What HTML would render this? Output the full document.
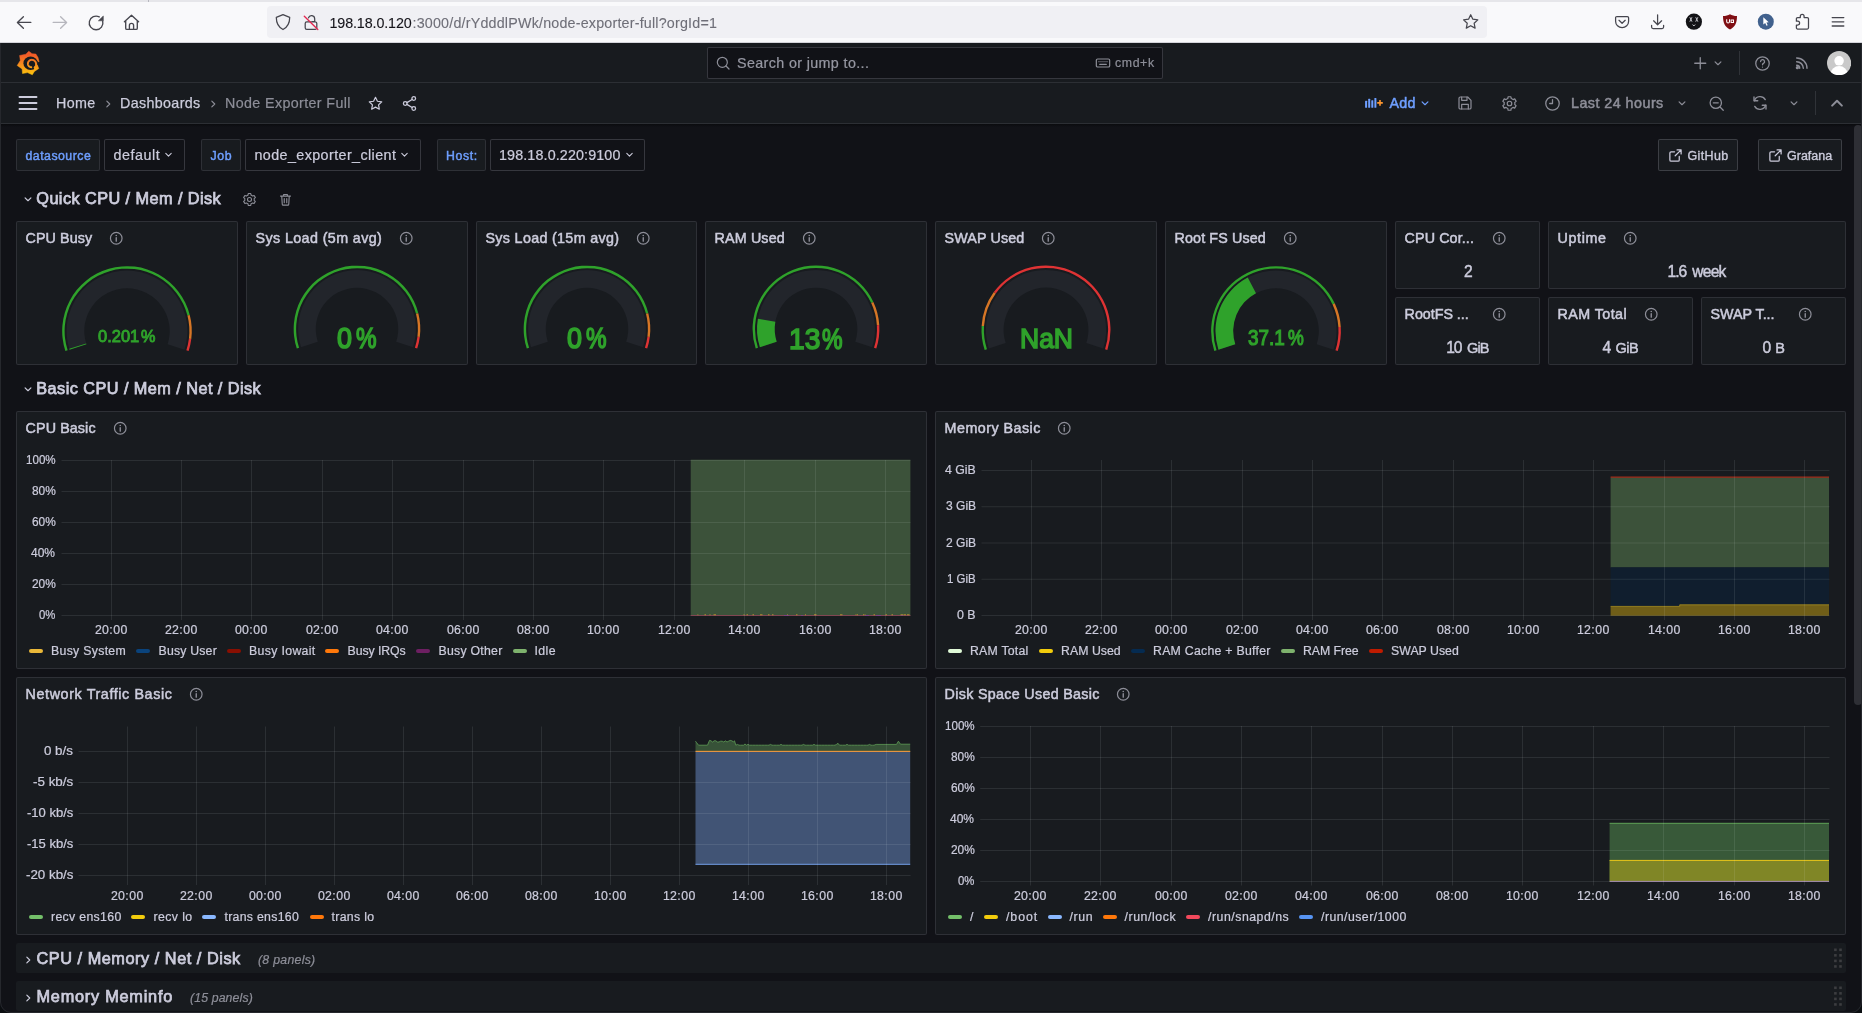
<!DOCTYPE html>
<html lang="en"><head><meta charset="utf-8"><title>Node Exporter Full - Dashboards - Grafana</title>
<style>
html,body{margin:0;padding:0;}
body{width:1862px;height:1013px;overflow:hidden;position:relative;background:#111217;font-family:"Liberation Sans",Arial,sans-serif;}
.b{position:absolute;display:block;}
.t{position:absolute;white-space:pre;display:block;}
svg text{font-family:"Liberation Sans",Arial,sans-serif;}
#root{position:absolute;left:0;top:0;width:1862px;height:1013px;will-change:transform;overflow:hidden;}
</style></head><body><div id="root">
<div class="b" style="left:0.00px;top:0.00px;width:1862.00px;height:43.00px;background:#f9f9fb;"></div>
<div class="b" style="left:0.00px;top:0.00px;width:1862.00px;height:2.00px;background:#e6e6ea;"></div>
<div class="b" style="left:148.00px;top:0.00px;width:1.00px;height:2.00px;background:#b8b8c0;"></div>
<div class="b" style="left:0.00px;top:42.00px;width:1862.00px;height:1.00px;background:#d4d4da;"></div>
<div class="b" style="left:267.00px;top:6.00px;width:1220.00px;height:32.00px;background:#f0f0f4;border-radius:4px;"></div>
<svg class="b" style="left:0;top:0" width="1862" height="43" viewBox="0 0 1862 43"><path d="M30.800 22.400H17.400M23.400 16.800L17.400 22.400L23.400 28.200" fill="none" stroke="#46464e" stroke-width="1.35" stroke-linecap="round" stroke-linejoin="round"/><path d="M53.200 22.400H66.600M60.600 16.800L66.600 22.400L60.600 28.200" fill="none" stroke="#b6b6bd" stroke-width="1.35" stroke-linecap="round" stroke-linejoin="round"/><path d="M102.700 21.200A6.850 6.850 0 1 1 99.300 16.900" fill="none" stroke="#46464e" stroke-width="1.35" stroke-linecap="round" stroke-linejoin="round"/><path d="M98.400 20.800L103.300 16L103.300 20.800Z" fill="#46464e" stroke="#46464e" stroke-width="0.600" stroke-linejoin="round"/><path d="M124.400 21.800L131.500 15.300L138.600 21.800M125.700 20.800V28.200a1.200 1.200 0 0 0 1.200 1.200h9.200a1.200 1.200 0 0 0 1.200-1.200V20.800M129.400 29.400V25.400a2.100 2.100 0 0 1 4.200 0V29.400" fill="none" stroke="#46464e" stroke-width="1.35" stroke-linecap="round" stroke-linejoin="round"/><path d="M283 14.600L289.700 17.400C289.700 22.800 287.600 27 283 29.500C278.400 27 276.300 22.800 276.300 17.400Z" fill="none" stroke="#46464e" stroke-width="1.25" stroke-linecap="round" stroke-linejoin="round"/><path d="M306.800 21.900h8.400a1.600 1.600 0 0 1 1.600 1.600v4.300a1.600 1.600 0 0 1-1.600 1.600h-8.400a1.600 1.600 0 0 1-1.600-1.600v-4.300a1.600 1.600 0 0 1 1.600-1.600zM308.500 17.800a3.200 3.200 0 0 1 6.200 .900V21.700h-2.400" fill="none" stroke="#46464e" stroke-width="1.25" stroke-linecap="round" stroke-linejoin="round"/><path d="M304.300 16.200L317.800 29.600" fill="none" stroke="#e22850" stroke-width="1.35" stroke-linecap="round" stroke-linejoin="round"/><path d="M1470.700 14.700l2.150 4.500 4.950.650-3.650 3.400.950 4.900-4.400-2.400-4.400 2.400.950-4.900-3.650-3.400 4.950-.650z" fill="none" stroke="#46464e" stroke-width="1.25" stroke-linecap="round" stroke-linejoin="round"/><path d="M1616.900 16.500h10.400a1.300 1.300 0 0 1 1.300 1.300v3.400a6.500 6.500 0 0 1-13 0v-3.400a1.300 1.300 0 0 1 1.300-1.300zM1619 20.300l3.100 3 3.100-3" fill="none" stroke="#46464e" stroke-width="1.25" stroke-linecap="round" stroke-linejoin="round"/><path d="M1657.600 14.800V24.600M1653.600 20.800l4 4 4-4M1651.600 25.300v1.700a1.500 1.500 0 0 0 1.500 1.500h9a1.500 1.500 0 0 0 1.500-1.500v-1.700" fill="none" stroke="#46464e" stroke-width="1.25" stroke-linecap="round" stroke-linejoin="round"/><circle cx="1693.900" cy="21.700" r="8.100" fill="#131316"/><path d="M1689.800 17.200l2.200 4.500M1692 17.200l-2.200 4.500M1695.700 17.200l2.200 4.500M1697.900 17.200l-2.200 4.500M1692.600 24.500l1.300 1.500 1.300-1.500" stroke="#e6e6ec" stroke-width=".800" fill="none"/><path d="M1730 14.200c1.900 1.200 4.300 1.700 7 1.900 0 6.900-2 11.100-7 13.500-5-2.400-7-6.600-7-13.500 2.700-.2 5.100-.7 7-1.900z" fill="#800f14"/><path d="M1726.700 19.300v2.200a1.400 1.400 0 0 0 2.800 0V19.300M1731.100 20h2.400v2.400h-2.400z" stroke="#fff" stroke-width="1.050" fill="none"/><circle cx="1765.800" cy="21.700" r="8" fill="#41618d"/><path d="M1763.300 17.200l5.400 5-2.300.2 1.300 2.900-1.200.5-1.300-2.900-1.900 1.500z" fill="#fff"/><path d="M1800.300 17.600v-1.200a1.900 1.900 0 0 1 3.800 0v1.200h3.200a1.200 1.200 0 0 1 1.200 1.200v9a1.200 1.200 0 0 1-1.200 1.200h-9.700a1.200 1.200 0 0 1-1.200-1.200v-2.800h1.300a1.900 1.900 0 0 0 0-3.800h-1.300v-2.400a1.200 1.200 0 0 1 1.200-1.200z" fill="none" stroke="#46464e" stroke-width="1.25" stroke-linecap="round" stroke-linejoin="round"/><path d="M1832.200 17.600h11.600M1832.200 21.800h11.600M1832.200 26h11.600" fill="none" stroke="#46464e" stroke-width="1.3" stroke-linecap="round" stroke-linejoin="round"/></svg>
<span class="t" style="left:329.50px;top:15px;font-size:14.30px;line-height:16px;color:#15141a;letter-spacing:-0.114px;-webkit-text-stroke:0.10px #15141a;">198.18.0.120</span>
<span class="t" style="left:412.50px;top:15px;font-size:14.30px;line-height:16px;color:#6f6f78;letter-spacing:0.195px;-webkit-text-stroke:0.10px #6f6f78;">:3000/d/rYdddlPWk/node-exporter-full?orgId=1</span>
<div class="b" style="left:0.00px;top:43.00px;width:1862.00px;height:40.00px;background:#181b1f;"></div>
<div class="b" style="left:0.00px;top:82.00px;width:1862.00px;height:1.00px;background:#2c2f34;"></div>
<div class="b" style="left:0.00px;top:83.00px;width:1862.00px;height:40.00px;background:#181b1f;"></div>
<div class="b" style="left:0.00px;top:123.00px;width:1862.00px;height:1.00px;background:#2c2f34;"></div>
<div class="b" style="left:0.00px;top:124.00px;width:1862.00px;height:3.00px;background:linear-gradient(#0a0b0e,#111217);"></div>
<svg class="b" style="left:8px;top:44px" width="40" height="38" viewBox="0 0 40 38">
<defs><linearGradient id="lg" gradientUnits="userSpaceOnUse" x1="0" y1="31" x2="0" y2="7"><stop offset="0" stop-color="#fcc60c"/><stop offset=".5" stop-color="#f6851f"/><stop offset=".85" stop-color="#f05a28"/></linearGradient></defs>
<path d="M20.8 7.2L17.9 10.2L11.6 11.5L12.3 16.5L9.2 21.5L14.1 24.9L14.5 29.5L19.5 28.6L24.3 30.8L26.4 27.4L30.8 24.5L29.3 20.9L31.0 17.6L30.0 13.5L27.9 10.1L24.0 9.7Z" fill="url(#lg)" stroke="url(#lg)" stroke-width="0.5" stroke-linejoin="round"/>
<ellipse cx="22.6" cy="19.25" rx="7.2" ry="6.65" fill="#181b1f"/>
<path d="M29.0 17.0L32 19.0L29.7 21.0Z" fill="#181b1f"/>
<path d="M26.92 23.22L27.31 22.72L27.63 22.18L27.87 21.60L28.02 21.00L28.10 20.39L28.09 19.78L28.00 19.18L27.83 18.61L27.58 18.06L27.27 17.56L26.89 17.11L26.46 16.72L25.99 16.39L25.48 16.13L24.94 15.95L24.39 15.84L23.83 15.80L23.28 15.84L22.74 15.96L22.23 16.14L21.75 16.39L21.32 16.70L20.93 17.06L20.60 17.47L20.33 17.92L20.12 18.39L19.99 18.88L19.92 19.38L19.92 19.88L19.98 20.38L20.11 20.85L20.30 21.30L20.55 21.71L20.85 22.09L21.20 22.41L21.58 22.68L21.99 22.90L22.42 23.06L22.86 23.15L23.31 23.19" fill="none" stroke="url(#lg)" stroke-width="1.9" stroke-linecap="round"/>
<path d="M25.6 23.3L28.4 20.8L30 21.5L29.5 24.5L26.5 25.4Z" fill="url(#lg)"/>
</svg>
<div class="b" style="left:707.00px;top:47.00px;width:456.00px;height:32.00px;background:#111217;border:1px solid rgba(204,204,220,0.20);border-radius:2px;box-sizing:border-box;"></div>
<svg class="b" style="left:714.50px;top:55.00px;color:rgb(141,142,152);" width="16" height="16" viewBox="0 0 24 24"><g fill="none" stroke="currentColor" stroke-width="1.8" stroke-linecap="round" stroke-linejoin="round"><circle cx="11" cy="11" r="7.500"/><path d="M16.500 16.500L21 21"/></g></svg>
<span class="t" style="left:737.00px;top:55px;font-size:14.30px;line-height:16px;color:rgb(150,151,162);letter-spacing:0.375px;-webkit-text-stroke:0.22px rgb(150,151,162);">Search or jump to...</span>
<svg class="b" style="left:1095.00px;top:55.00px;color:rgb(141,142,152);" width="16" height="16" viewBox="0 0 24 24"><g fill="none" stroke="currentColor" stroke-width="1.8" stroke-linecap="round" stroke-linejoin="round"><rect x="2" y="6" width="20" height="12" rx="2"/><path d="M6 10h.01M9 10h.01M12 10h.01M15 10h.01M18 10h.01M7 14h10"/></g></svg>
<span class="t" style="left:1115.00px;top:56px;font-size:12.30px;line-height:14px;color:rgb(141,142,152);letter-spacing:0.625px;-webkit-text-stroke:0.22px rgb(141,142,152);">cmd+k</span>
<svg class="b" style="left:1692.35px;top:54.75px;color:rgb(141,142,152);" width="16.5" height="16.5" viewBox="0 0 24 24"><g fill="none" stroke="currentColor" stroke-width="1.9" stroke-linecap="round" stroke-linejoin="round"><path d="M12 4v16M4 12h16"/></g></svg>
<svg class="b" style="left:1710.90px;top:56.30px;color:rgb(141,142,152);" width="14" height="14" viewBox="0 0 24 24"><g fill="none" stroke="currentColor" stroke-width="2" stroke-linecap="round" stroke-linejoin="round"><path d="M7 10l5 5 5-5"/></g></svg>
<div class="b" style="left:1739.00px;top:51.00px;width:1.00px;height:23.50px;background:#303338;"></div>
<svg class="b" style="left:1753.60px;top:54.50px;color:rgb(141,142,152);" width="17" height="17" viewBox="0 0 24 24"><g fill="none" stroke="currentColor" stroke-width="1.8" stroke-linecap="round" stroke-linejoin="round"><circle cx="12" cy="12" r="9.500"/><path d="M9.300 9.300a2.800 2.800 0 1 1 4 2.600c-.900.500-1.300 1-1.300 2"/><path d="M12 17v.01"/></g></svg>
<svg class="b" style="left:1793.50px;top:55.30px;color:rgb(141,142,152);" width="16" height="16" viewBox="0 0 24 24"><g fill="none" stroke="currentColor" stroke-width="2.2" stroke-linecap="round" stroke-linejoin="round"><path d="M4 4.500a15.500 15.500 0 0 1 15.500 15.500M4 10a10 10 0 0 1 10 10M4 15.500a4.500 4.500 0 0 1 4.500 4.500"/><circle cx="5" cy="19" r="1.300" fill="currentColor"/></g></svg>
<svg class="b" style="left:1826.800px;top:50.900px" width="24.200" height="24.200" viewBox="0 0 24 24"><defs><clipPath id="av"><circle cx="12" cy="12" r="12"/></clipPath></defs><circle cx="12" cy="12" r="12" fill="#c9c9c9"/><g clip-path="url(#av)" fill="#fff"><circle cx="12" cy="9.700" r="4.700"/><ellipse cx="12" cy="23" rx="8.500" ry="8"/></g></svg>
<svg class="b" style="left:16.00px;top:91.00px;color:rgb(204,204,220);" width="24" height="24" viewBox="0 0 24 24"><g fill="none" stroke="currentColor" stroke-width="1.9" stroke-linecap="round" stroke-linejoin="round"><path d="M3.500 6h17M3.500 12h17M3.500 18h17"/></g></svg>
<span class="t" style="left:56.00px;top:95px;font-size:14.30px;line-height:16px;color:rgb(204,204,220);letter-spacing:0.333px;-webkit-text-stroke:0.25px rgb(204,204,220);">Home</span>
<svg class="b" style="left:100.50px;top:96.50px;color:rgb(141,142,152);" width="14" height="14" viewBox="0 0 24 24"><g fill="none" stroke="currentColor" stroke-width="2" stroke-linecap="round" stroke-linejoin="round"><path d="M10 7l5 5-5 5"/></g></svg>
<span class="t" style="left:120.00px;top:95px;font-size:14.30px;line-height:16px;color:rgb(204,204,220);letter-spacing:0.347px;-webkit-text-stroke:0.25px rgb(204,204,220);">Dashboards</span>
<svg class="b" style="left:206.00px;top:96.50px;color:rgb(141,142,152);" width="14" height="14" viewBox="0 0 24 24"><g fill="none" stroke="currentColor" stroke-width="2" stroke-linecap="round" stroke-linejoin="round"><path d="M10 7l5 5-5 5"/></g></svg>
<span class="t" style="left:225.00px;top:95px;font-size:14.30px;line-height:16px;color:rgb(141,142,152);letter-spacing:0.368px;-webkit-text-stroke:0.20px rgb(141,142,152);">Node Exporter Full</span>
<svg class="b" style="left:366.50px;top:94.50px;color:rgb(204,204,220);" width="17" height="17" viewBox="0 0 24 24"><g fill="none" stroke="currentColor" stroke-width="1.7" stroke-linecap="round" stroke-linejoin="round"><path d="M12 3.2l2.700 5.600 6.100.800-4.500 4.300 1.100 6.100L12 17.100 6.600 20l1.100-6.100L3.200 9.600l6.100-.800z"/></g></svg>
<svg class="b" style="left:400.50px;top:94.50px;color:rgb(204,204,220);" width="17" height="17" viewBox="0 0 24 24"><g fill="none" stroke="currentColor" stroke-width="1.8" stroke-linecap="round" stroke-linejoin="round"><circle cx="18" cy="5" r="2.600"/><circle cx="6" cy="12" r="2.600"/><circle cx="18" cy="19" r="2.600"/><path d="M8.300 10.700l7.400-4.400M8.300 13.300l7.400 4.400"/></g></svg>
<svg class="b" style="left:1360px;top:94px" width="26" height="18" viewBox="1360 94 26 18"><g fill="#6e9fff"><rect x="1365.100" y="100.800" width="2" height="7" rx=".5"/><rect x="1368.200" y="98.700" width="2" height="9.100" rx=".5"/><rect x="1371.300" y="100.200" width="2" height="7.600" rx=".5"/><rect x="1374.400" y="98" width="2" height="9.800" rx=".5"/></g><path d="M1380 100.100v5.600M1377.200 102.900h5.600" stroke="#ff9830" stroke-width="1.600" fill="none"/></svg>
<span class="t" style="left:1389.50px;top:95px;font-size:14.30px;line-height:16px;color:rgb(110,159,255);letter-spacing:0.263px;-webkit-text-stroke:0.50px rgb(110,159,255);">Add</span>
<svg class="b" style="left:1418.10px;top:96.20px;color:rgb(110,159,255);" width="14" height="14" viewBox="0 0 24 24"><g fill="none" stroke="currentColor" stroke-width="2" stroke-linecap="round" stroke-linejoin="round"><path d="M7 10l5 5 5-5"/></g></svg>
<svg class="b" style="left:1457.00px;top:95.00px;color:rgb(141,142,152);" width="16" height="16" viewBox="0 0 24 24"><g fill="none" stroke="currentColor" stroke-width="1.8" stroke-linecap="round" stroke-linejoin="round"><path d="M5 3h11l5 5v11a2 2 0 0 1-2 2H5a2 2 0 0 1-2-2V5a2 2 0 0 1 2-2z"/><path d="M7 3v5h8V3M7 21v-7h10v7"/></g></svg>
<svg class="b" style="left:1500.50px;top:94.50px;color:rgb(141,142,152);" width="17" height="17" viewBox="0 0 24 24"><g fill="none" stroke="currentColor" stroke-width="1.7" stroke-linecap="round" stroke-linejoin="round"><circle cx="12" cy="12" r="3.200"/><path d="M19.400 13.500a7.700 7.700 0 0 0 0-3l2-1.500-2-3.500-2.300 1a7.700 7.700 0 0 0-2.600-1.500L14 2.500h-4l-.400 2.500A7.700 7.700 0 0 0 7 6.500l-2.400-1-2 3.500 2 1.500a7.700 7.700 0 0 0 0 3l-2 1.500 2 3.500 2.400-1a7.700 7.700 0 0 0 2.600 1.500l.400 2.500h4l.400-2.500a7.700 7.700 0 0 0 2.600-1.500l2.300 1 2-3.500z"/></g></svg>
<svg class="b" style="left:1544.30px;top:94.50px;color:rgb(141,142,152);" width="17" height="17" viewBox="0 0 24 24"><g fill="none" stroke="currentColor" stroke-width="1.8" stroke-linecap="round" stroke-linejoin="round"><circle cx="12" cy="12" r="9.500"/><path d="M12 6.500V12H8"/></g></svg>
<span class="t" style="left:1571.00px;top:95px;font-size:14.30px;line-height:16px;color:rgb(141,142,152);letter-spacing:0.469px;-webkit-text-stroke:0.50px rgb(141,142,152);">Last 24 hours</span>
<svg class="b" style="left:1675.00px;top:96.20px;color:rgb(141,142,152);" width="14" height="14" viewBox="0 0 24 24"><g fill="none" stroke="currentColor" stroke-width="2" stroke-linecap="round" stroke-linejoin="round"><path d="M7 10l5 5 5-5"/></g></svg>
<svg class="b" style="left:1707.80px;top:94.80px;color:rgb(141,142,152);" width="17" height="17" viewBox="0 0 24 24"><g fill="none" stroke="currentColor" stroke-width="1.8" stroke-linecap="round" stroke-linejoin="round"><circle cx="11" cy="11" r="8"/><path d="M17 17l4.500 4.500M7.500 11h7"/></g></svg>
<svg class="b" style="left:1751.00px;top:93.80px;color:rgb(141,142,152);" width="18" height="18" viewBox="0 0 24 24"><g fill="none" stroke="currentColor" stroke-width="1.8" stroke-linecap="round" stroke-linejoin="round"><path d="M4 4v5h5"/><path d="M20 20v-5h-5"/><path d="M4.500 9A8 8 0 0 1 19 7.500M19.500 15A8 8 0 0 1 5 16.500"/></g></svg>
<svg class="b" style="left:1786.90px;top:96.20px;color:rgb(141,142,152);" width="14" height="14" viewBox="0 0 24 24"><g fill="none" stroke="currentColor" stroke-width="2" stroke-linecap="round" stroke-linejoin="round"><path d="M7 10l5 5 5-5"/></g></svg>
<div class="b" style="left:1815.00px;top:91.00px;width:1.00px;height:24.00px;background:#303338;"></div>
<svg class="b" style="left:1828.10px;top:94.20px;color:rgb(141,142,152);" width="18" height="18" viewBox="0 0 24 24"><g fill="none" stroke="currentColor" stroke-width="2.7" stroke-linecap="round" stroke-linejoin="round"><path d="M5.500 15.500l6.500-6.500 6.500 6.500"/></g></svg>
<div class="b" style="left:1854.00px;top:125.00px;width:8.00px;height:580.00px;background:#2e2f35;border-radius:4px;"></div>
<div class="b" style="left:16.00px;top:139.00px;width:84.00px;height:32.00px;background:#181b1f;border:1px solid rgba(204,204,220,0.12);border-radius:2px;box-sizing:border-box;"></div>
<span class="t" style="left:25.50px;top:149px;font-size:12.30px;line-height:14px;color:rgb(110,159,255);letter-spacing:0.486px;-webkit-text-stroke:0.45px rgb(110,159,255);">datasource</span>
<div class="b" style="left:104.00px;top:139.00px;width:81.00px;height:32.00px;background:#111217;border:1px solid rgba(204,204,220,0.20);border-radius:2px;box-sizing:border-box;"></div>
<span class="t" style="left:113.50px;top:147px;font-size:14.30px;line-height:16px;color:rgb(204,204,220);letter-spacing:0.542px;-webkit-text-stroke:0.22px rgb(204,204,220);">default</span>
<svg class="b" style="left:161.70px;top:148.30px;color:rgb(204,204,220);" width="13" height="13" viewBox="0 0 24 24"><g fill="none" stroke="currentColor" stroke-width="2" stroke-linecap="round" stroke-linejoin="round"><path d="M7 10l5 5 5-5"/></g></svg>
<div class="b" style="left:201.00px;top:139.00px;width:40.00px;height:32.00px;background:#181b1f;border:1px solid rgba(204,204,220,0.12);border-radius:2px;box-sizing:border-box;"></div>
<span class="t" style="left:210.50px;top:149px;font-size:12.30px;line-height:14px;color:rgb(110,159,255);letter-spacing:0.625px;-webkit-text-stroke:0.45px rgb(110,159,255);">Job</span>
<div class="b" style="left:245.00px;top:139.00px;width:176.00px;height:32.00px;background:#111217;border:1px solid rgba(204,204,220,0.20);border-radius:2px;box-sizing:border-box;"></div>
<span class="t" style="left:254.50px;top:147px;font-size:14.30px;line-height:16px;color:rgb(204,204,220);letter-spacing:0.414px;-webkit-text-stroke:0.22px rgb(204,204,220);">node_exporter_client</span>
<svg class="b" style="left:398.20px;top:148.30px;color:rgb(204,204,220);" width="13" height="13" viewBox="0 0 24 24"><g fill="none" stroke="currentColor" stroke-width="2" stroke-linecap="round" stroke-linejoin="round"><path d="M7 10l5 5 5-5"/></g></svg>
<div class="b" style="left:437.00px;top:139.00px;width:49.00px;height:32.00px;background:#181b1f;border:1px solid rgba(204,204,220,0.12);border-radius:2px;box-sizing:border-box;"></div>
<span class="t" style="left:446.00px;top:149px;font-size:12.30px;line-height:14px;color:rgb(110,159,255);letter-spacing:0.594px;-webkit-text-stroke:0.45px rgb(110,159,255);">Host:</span>
<div class="b" style="left:490.00px;top:139.00px;width:155.00px;height:32.00px;background:#111217;border:1px solid rgba(204,204,220,0.20);border-radius:2px;box-sizing:border-box;"></div>
<span class="t" style="left:499.00px;top:147px;font-size:14.30px;line-height:16px;color:rgb(204,204,220);letter-spacing:0.133px;-webkit-text-stroke:0.22px rgb(204,204,220);">198.18.0.220:9100</span>
<svg class="b" style="left:622.70px;top:148.30px;color:rgb(204,204,220);" width="13" height="13" viewBox="0 0 24 24"><g fill="none" stroke="currentColor" stroke-width="2" stroke-linecap="round" stroke-linejoin="round"><path d="M7 10l5 5 5-5"/></g></svg>
<div class="b" style="left:1658.00px;top:139.00px;width:80.00px;height:32.00px;background:#181b1f;border:1px solid rgba(204,204,220,0.20);border-radius:2px;box-sizing:border-box;"></div>
<svg class="b" style="left:1667.50px;top:147.50px;color:rgb(204,204,220);" width="15" height="15" viewBox="0 0 24 24"><g fill="none" stroke="currentColor" stroke-width="2" stroke-linecap="round" stroke-linejoin="round"><path d="M18 13.500V19a2 2 0 0 1-2 2H5a2 2 0 0 1-2-2V8a2 2 0 0 1 2-2h5.500"/><path d="M14.500 3H21v6.500M21 3l-9.500 9.500"/></g></svg>
<span class="t" style="left:1687.50px;top:149px;font-size:12.50px;line-height:14px;color:rgb(204,204,220);letter-spacing:0.365px;-webkit-text-stroke:0.35px rgb(204,204,220);">GitHub</span>
<div class="b" style="left:1758.00px;top:139.00px;width:84.00px;height:32.00px;background:#181b1f;border:1px solid rgba(204,204,220,0.20);border-radius:2px;box-sizing:border-box;"></div>
<svg class="b" style="left:1767.50px;top:147.50px;color:rgb(204,204,220);" width="15" height="15" viewBox="0 0 24 24"><g fill="none" stroke="currentColor" stroke-width="2" stroke-linecap="round" stroke-linejoin="round"><path d="M18 13.500V19a2 2 0 0 1-2 2H5a2 2 0 0 1-2-2V8a2 2 0 0 1 2-2h5.500"/><path d="M14.500 3H21v6.500M21 3l-9.500 9.500"/></g></svg>
<span class="t" style="left:1787.00px;top:149px;font-size:12.50px;line-height:14px;color:rgb(204,204,220);letter-spacing:0.008px;-webkit-text-stroke:0.35px rgb(204,204,220);">Grafana</span>
<svg class="b" style="left:21.00px;top:192.00px;color:rgb(204,204,220);" width="14" height="14" viewBox="0 0 24 24"><g fill="none" stroke="currentColor" stroke-width="2" stroke-linecap="round" stroke-linejoin="round"><path d="M7 10l5 5 5-5"/></g></svg>
<span class="t" style="left:36.30px;top:189px;font-size:16.30px;line-height:18px;color:rgb(204,204,220);letter-spacing:0.426px;-webkit-text-stroke:0.75px rgb(204,204,220);">Quick CPU / Mem / Disk</span>
<svg class="b" style="left:241.50px;top:191.50px;color:rgb(141,142,152);" width="15" height="15" viewBox="0 0 24 24"><g fill="none" stroke="currentColor" stroke-width="1.7" stroke-linecap="round" stroke-linejoin="round"><circle cx="12" cy="12" r="3.200"/><path d="M19.400 13.500a7.700 7.700 0 0 0 0-3l2-1.500-2-3.500-2.300 1a7.700 7.700 0 0 0-2.600-1.500L14 2.500h-4l-.400 2.500A7.700 7.700 0 0 0 7 6.500l-2.400-1-2 3.500 2 1.500a7.700 7.700 0 0 0 0 3l-2 1.500 2 3.500 2.400-1a7.700 7.700 0 0 0 2.600 1.500l.400 2.500h4l.400-2.500a7.700 7.700 0 0 0 2.600-1.500l2.300 1 2-3.500z"/></g></svg>
<svg class="b" style="left:277.70px;top:191.50px;color:rgb(141,142,152);" width="15" height="15" viewBox="0 0 24 24"><g fill="none" stroke="currentColor" stroke-width="1.8" stroke-linecap="round" stroke-linejoin="round"><path d="M4 6.500h16M9 6.500V4h6v2.500M6 6.500l.800 13a1.500 1.500 0 0 0 1.500 1.500h7.400a1.500 1.500 0 0 0 1.500-1.500l.800-13M10 10.500v6.500M14 10.500v6.500"/></g></svg>
<svg class="b" style="left:21.00px;top:382.00px;color:rgb(204,204,220);" width="14" height="14" viewBox="0 0 24 24"><g fill="none" stroke="currentColor" stroke-width="2" stroke-linecap="round" stroke-linejoin="round"><path d="M7 10l5 5 5-5"/></g></svg>
<span class="t" style="left:36.30px;top:379px;font-size:16.30px;line-height:18px;color:rgb(204,204,220);letter-spacing:0.438px;-webkit-text-stroke:0.75px rgb(204,204,220);">Basic CPU / Mem / Net / Disk</span>
<div class="b" style="left:16.00px;top:221.00px;width:222.00px;height:144.00px;background:#181b1f;border:1px solid rgba(204,204,220,0.12);border-radius:2px;box-sizing:border-box;"></div>
<span class="t" style="left:25.50px;top:230px;font-size:14.30px;line-height:16px;color:rgb(204,204,220);letter-spacing:0.107px;-webkit-text-stroke:0.50px rgb(204,204,220);">CPU Busy</span>
<svg class="b" style="left:108.75px;top:230.75px;color:rgb(141,142,152);" width="14.5" height="14.5" viewBox="0 0 24 24"><g fill="none" stroke="currentColor" stroke-width="2" stroke-linecap="round" stroke-linejoin="round"><circle cx="12" cy="12" r="9.600"/><path d="M12 11.200v5.600" stroke-width="2.300"/><path d="M12 7.400v.01" stroke-width="2.700"/></g></svg>
<svg class="b" style="left:57.00px;top:260.70px;" width="140" height="95" viewBox="0 0 140 95"><g transform="translate(-57.00 -260.70)"><path d="M69.56 349.36A60.40 60.40 0 1 1 184.44 349.36L167.61 343.90A42.70 42.70 0 1 0 86.39 343.90Z" fill="#22252b"/><path d="M65.37 350.72A64.80 64.80 0 1 1 189.76 314.58L187.44 315.18A62.40 62.40 0 1 0 67.65 349.98Z" fill="rgb(47,162,43)"/><path d="M189.76 314.58A64.80 64.80 0 0 1 191.29 338.82L188.91 338.52A62.40 62.40 0 0 0 187.44 315.18Z" fill="rgb(214,118,38)"/><path d="M191.29 338.82A64.80 64.80 0 0 1 188.63 350.72L186.35 349.98A62.40 62.40 0 0 0 188.91 338.52Z" fill="rgb(222,51,52)"/><path d="M69.56 349.36A60.40 60.40 0 0 1 69.27 348.46L86.19 343.26A42.70 42.70 0 0 0 86.39 343.90Z" fill="rgb(47,162,43)"/></g></svg>
<span class="t" style="left:97.80px;top:326px;font-size:17.20px;line-height:20px;color:rgb(47,162,43);transform-origin:0 0;transform:scaleX(0.9577);-webkit-text-stroke:0.95px rgb(47,162,43);">0.201</span>
<span class="t" style="left:140.80px;top:326px;font-size:17.20px;line-height:20px;color:rgb(47,162,43);transform-origin:0 0;transform:scaleX(0.9431);-webkit-text-stroke:0.95px rgb(47,162,43);">%</span>
<div class="b" style="left:246.00px;top:221.00px;width:222.00px;height:144.00px;background:#181b1f;border:1px solid rgba(204,204,220,0.12);border-radius:2px;box-sizing:border-box;"></div>
<span class="t" style="left:255.50px;top:230px;font-size:14.30px;line-height:16px;color:rgb(204,204,220);letter-spacing:0.398px;-webkit-text-stroke:0.50px rgb(204,204,220);">Sys Load (5m avg)</span>
<svg class="b" style="left:398.75px;top:230.75px;color:rgb(141,142,152);" width="14.5" height="14.5" viewBox="0 0 24 24"><g fill="none" stroke="currentColor" stroke-width="2" stroke-linecap="round" stroke-linejoin="round"><circle cx="12" cy="12" r="9.600"/><path d="M12 11.200v5.600" stroke-width="2.300"/><path d="M12 7.400v.01" stroke-width="2.700"/></g></svg>
<svg class="b" style="left:287.10px;top:259.20px;" width="140" height="95" viewBox="0 0 140 95"><g transform="translate(-287.10 -259.20)"><path d="M301.08 347.40A58.90 58.90 0 1 1 413.12 347.40L396.28 341.93A41.20 41.20 0 1 0 317.92 341.93Z" fill="#22252b"/><path d="M296.90 348.76A63.30 63.30 0 1 1 418.41 313.46L416.09 314.05A60.90 60.90 0 1 0 299.18 348.02Z" fill="rgb(47,162,43)"/><path d="M418.41 313.46A63.30 63.30 0 0 1 419.90 337.13L417.52 336.83A60.90 60.90 0 0 0 416.09 314.05Z" fill="rgb(214,118,38)"/><path d="M419.90 337.13A63.30 63.30 0 0 1 417.30 348.76L415.02 348.02A60.90 60.90 0 0 0 417.52 336.83Z" fill="rgb(222,51,52)"/></g></svg>
<span class="t" style="left:336.80px;top:321px;font-size:30.00px;line-height:33px;color:rgb(47,162,43);transform-origin:0 0;transform:scaleX(0.8962);-webkit-text-stroke:1.65px rgb(47,162,43);">0</span>
<span class="t" style="left:355.90px;top:321px;font-size:30.00px;line-height:33px;color:rgb(47,162,43);transform-origin:0 0;transform:scaleX(0.7700);-webkit-text-stroke:1.65px rgb(47,162,43);">%</span>
<div class="b" style="left:476.00px;top:221.00px;width:221.00px;height:144.00px;background:#181b1f;border:1px solid rgba(204,204,220,0.12);border-radius:2px;box-sizing:border-box;"></div>
<span class="t" style="left:485.50px;top:230px;font-size:14.30px;line-height:16px;color:rgb(204,204,220);letter-spacing:0.324px;-webkit-text-stroke:0.50px rgb(204,204,220);">Sys Load (15m avg)</span>
<svg class="b" style="left:635.75px;top:230.75px;color:rgb(141,142,152);" width="14.5" height="14.5" viewBox="0 0 24 24"><g fill="none" stroke="currentColor" stroke-width="2" stroke-linecap="round" stroke-linejoin="round"><circle cx="12" cy="12" r="9.600"/><path d="M12 11.200v5.600" stroke-width="2.300"/><path d="M12 7.400v.01" stroke-width="2.700"/></g></svg>
<svg class="b" style="left:517.10px;top:259.20px;" width="140" height="95" viewBox="0 0 140 95"><g transform="translate(-517.10 -259.20)"><path d="M531.08 347.40A58.90 58.90 0 1 1 643.12 347.40L626.28 341.93A41.20 41.20 0 1 0 547.92 341.93Z" fill="#22252b"/><path d="M526.90 348.76A63.30 63.30 0 1 1 648.41 313.46L646.09 314.05A60.90 60.90 0 1 0 529.18 348.02Z" fill="rgb(47,162,43)"/><path d="M648.41 313.46A63.30 63.30 0 0 1 649.90 337.13L647.52 336.83A60.90 60.90 0 0 0 646.09 314.05Z" fill="rgb(214,118,38)"/><path d="M649.90 337.13A63.30 63.30 0 0 1 647.30 348.76L645.02 348.02A60.90 60.90 0 0 0 647.52 336.83Z" fill="rgb(222,51,52)"/></g></svg>
<span class="t" style="left:566.80px;top:321px;font-size:30.00px;line-height:33px;color:rgb(47,162,43);transform-origin:0 0;transform:scaleX(0.8962);-webkit-text-stroke:1.65px rgb(47,162,43);">0</span>
<span class="t" style="left:585.90px;top:321px;font-size:30.00px;line-height:33px;color:rgb(47,162,43);transform-origin:0 0;transform:scaleX(0.7700);-webkit-text-stroke:1.65px rgb(47,162,43);">%</span>
<div class="b" style="left:705.00px;top:221.00px;width:222.00px;height:144.00px;background:#181b1f;border:1px solid rgba(204,204,220,0.12);border-radius:2px;box-sizing:border-box;"></div>
<span class="t" style="left:714.50px;top:230px;font-size:14.30px;line-height:16px;color:rgb(204,204,220);letter-spacing:0.161px;-webkit-text-stroke:0.50px rgb(204,204,220);">RAM Used</span>
<svg class="b" style="left:801.75px;top:230.75px;color:rgb(141,142,152);" width="14.5" height="14.5" viewBox="0 0 24 24"><g fill="none" stroke="currentColor" stroke-width="2" stroke-linecap="round" stroke-linejoin="round"><circle cx="12" cy="12" r="9.600"/><path d="M12 11.200v5.600" stroke-width="2.300"/><path d="M12 7.400v.01" stroke-width="2.700"/></g></svg>
<svg class="b" style="left:746.00px;top:259.30px;" width="140" height="95" viewBox="0 0 140 95"><g transform="translate(-746.00 -259.30)"><path d="M759.89 347.53A59.00 59.00 0 1 1 872.11 347.53L855.28 342.06A41.30 41.30 0 1 0 776.72 342.06Z" fill="#22252b"/><path d="M755.70 348.89A63.40 63.40 0 0 1 873.37 302.31L871.19 303.33A61.00 61.00 0 0 0 757.99 348.15Z" fill="rgb(47,162,43)"/><path d="M873.37 302.31A63.40 63.40 0 0 1 879.27 325.32L876.88 325.47A61.00 61.00 0 0 0 871.19 303.33Z" fill="rgb(214,118,38)"/><path d="M879.27 325.32A63.40 63.40 0 0 1 876.30 348.89L874.01 348.15A61.00 61.00 0 0 0 876.88 325.47Z" fill="rgb(222,51,52)"/><path d="M759.89 347.53A59.00 59.00 0 0 1 757.91 318.97L775.34 322.07A41.30 41.30 0 0 0 776.72 342.06Z" fill="rgb(47,162,43)"/></g></svg>
<span class="t" style="left:788.70px;top:322px;font-size:30.00px;line-height:33px;color:rgb(47,162,43);transform-origin:0 0;transform:scaleX(0.9378);-webkit-text-stroke:1.65px rgb(47,162,43);">13</span>
<span class="t" style="left:822.00px;top:322px;font-size:30.00px;line-height:33px;color:rgb(47,162,43);transform-origin:0 0;transform:scaleX(0.7700);-webkit-text-stroke:1.65px rgb(47,162,43);">%</span>
<div class="b" style="left:935.00px;top:221.00px;width:222.00px;height:144.00px;background:#181b1f;border:1px solid rgba(204,204,220,0.12);border-radius:2px;box-sizing:border-box;"></div>
<span class="t" style="left:944.50px;top:230px;font-size:14.30px;line-height:16px;color:rgb(204,204,220);letter-spacing:0.141px;-webkit-text-stroke:0.50px rgb(204,204,220);">SWAP Used</span>
<svg class="b" style="left:1040.75px;top:230.75px;color:rgb(141,142,152);" width="14.5" height="14.5" viewBox="0 0 24 24"><g fill="none" stroke="currentColor" stroke-width="2" stroke-linecap="round" stroke-linejoin="round"><circle cx="12" cy="12" r="9.600"/><path d="M12 11.200v5.600" stroke-width="2.300"/><path d="M12 7.400v.01" stroke-width="2.700"/></g></svg>
<svg class="b" style="left:975.90px;top:260.40px;" width="140" height="95" viewBox="0 0 140 95"><g transform="translate(-975.90 -260.40)"><path d="M988.74 348.97A60.10 60.10 0 1 1 1103.06 348.97L1086.22 343.50A42.40 42.40 0 1 0 1005.58 343.50Z" fill="#22252b"/><path d="M984.56 350.33A64.50 64.50 0 0 1 981.53 326.35L983.92 326.50A62.10 62.10 0 0 0 986.84 349.59Z" fill="rgb(47,162,43)"/><path d="M981.53 326.35A64.50 64.50 0 0 1 993.72 292.49L995.66 293.90A62.10 62.10 0 0 0 983.92 326.50Z" fill="rgb(214,118,38)"/><path d="M993.72 292.49A64.50 64.50 0 0 1 1107.24 350.33L1104.96 349.59A62.10 62.10 0 0 0 995.66 293.90Z" fill="rgb(222,51,52)"/></g></svg>
<span class="t" style="left:1019.50px;top:323px;font-size:27.50px;line-height:31px;color:rgb(47,162,43);transform-origin:0 0;transform:scaleX(0.9636);-webkit-text-stroke:1.51px rgb(47,162,43);">NaN</span>
<div class="b" style="left:1165.00px;top:221.00px;width:222.00px;height:144.00px;background:#181b1f;border:1px solid rgba(204,204,220,0.12);border-radius:2px;box-sizing:border-box;"></div>
<span class="t" style="left:1174.50px;top:230px;font-size:14.30px;line-height:16px;color:rgb(204,204,220);letter-spacing:0.136px;-webkit-text-stroke:0.50px rgb(204,204,220);">Root FS Used</span>
<svg class="b" style="left:1282.75px;top:230.75px;color:rgb(141,142,152);" width="14.5" height="14.5" viewBox="0 0 24 24"><g fill="none" stroke="currentColor" stroke-width="2" stroke-linecap="round" stroke-linejoin="round"><circle cx="12" cy="12" r="9.600"/><path d="M12 11.200v5.600" stroke-width="2.300"/><path d="M12 7.400v.01" stroke-width="2.700"/></g></svg>
<svg class="b" style="left:1206.00px;top:260.80px;" width="140" height="95" viewBox="0 0 140 95"><g transform="translate(-1206.00 -260.80)"><path d="M1218.46 349.50A60.50 60.50 0 1 1 1333.54 349.50L1316.71 344.03A42.80 42.80 0 1 0 1235.29 344.03Z" fill="#22252b"/><path d="M1214.28 350.86A64.90 64.90 0 0 1 1334.72 303.17L1332.55 304.19A62.50 62.50 0 0 0 1216.56 350.11Z" fill="rgb(47,162,43)"/><path d="M1334.72 303.17A64.90 64.90 0 0 1 1340.77 326.72L1338.38 326.88A62.50 62.50 0 0 0 1332.55 304.19Z" fill="rgb(214,118,38)"/><path d="M1340.77 326.72A64.90 64.90 0 0 1 1337.72 350.86L1335.44 350.11A62.50 62.50 0 0 0 1338.38 326.88Z" fill="rgb(222,51,52)"/><path d="M1218.46 349.50A60.50 60.50 0 0 1 1247.72 277.31L1256.00 292.96A42.80 42.80 0 0 0 1235.29 344.03Z" fill="rgb(47,162,43)"/></g></svg>
<span class="t" style="left:1248.30px;top:325px;font-size:22.50px;line-height:25px;color:rgb(47,162,43);transform-origin:0 0;transform:scaleX(0.8389);-webkit-text-stroke:1.24px rgb(47,162,43);">37.1</span>
<span class="t" style="left:1287.50px;top:325px;font-size:22.50px;line-height:25px;color:rgb(47,162,43);transform-origin:0 0;transform:scaleX(0.7900);-webkit-text-stroke:1.24px rgb(47,162,43);">%</span>
<div class="b" style="left:1395.00px;top:221.00px;width:145.00px;height:68.00px;background:#181b1f;border:1px solid rgba(204,204,220,0.12);border-radius:2px;box-sizing:border-box;"></div>
<span class="t" style="left:1404.60px;top:230px;font-size:14.30px;line-height:16px;color:rgb(204,204,220);letter-spacing:0.108px;-webkit-text-stroke:0.50px rgb(204,204,220);">CPU Cor...</span>
<svg class="b" style="left:1491.95px;top:230.75px;color:rgb(141,142,152);" width="14.5" height="14.5" viewBox="0 0 24 24"><g fill="none" stroke="currentColor" stroke-width="2" stroke-linecap="round" stroke-linejoin="round"><circle cx="12" cy="12" r="9.600"/><path d="M12 11.200v5.600" stroke-width="2.300"/><path d="M12 7.400v.01" stroke-width="2.700"/></g></svg>
<span class="t" style="left:1463.90px;top:263px;font-size:15.60px;line-height:17px;color:rgb(204,204,220);-webkit-text-stroke:0.45px rgb(204,204,220);">2</span>
<div class="b" style="left:1548.00px;top:221.00px;width:298.00px;height:68.00px;background:#181b1f;border:1px solid rgba(204,204,220,0.12);border-radius:2px;box-sizing:border-box;"></div>
<span class="t" style="left:1557.60px;top:230px;font-size:14.30px;line-height:16px;color:rgb(204,204,220);letter-spacing:0.595px;-webkit-text-stroke:0.50px rgb(204,204,220);">Uptime</span>
<svg class="b" style="left:1622.65px;top:230.75px;color:rgb(141,142,152);" width="14.5" height="14.5" viewBox="0 0 24 24"><g fill="none" stroke="currentColor" stroke-width="2" stroke-linecap="round" stroke-linejoin="round"><circle cx="12" cy="12" r="9.600"/><path d="M12 11.200v5.600" stroke-width="2.300"/><path d="M12 7.400v.01" stroke-width="2.700"/></g></svg>
<span class="t" style="left:1667.60px;top:263px;font-size:15.60px;line-height:17px;color:rgb(204,204,220);letter-spacing:-1.025px;-webkit-text-stroke:0.45px rgb(204,204,220);">1.6</span>
<span class="t" style="left:1692.33px;top:263px;font-size:15.60px;line-height:17px;color:rgb(204,204,220);letter-spacing:-0.808px;-webkit-text-stroke:0.45px rgb(204,204,220);">week</span>
<div class="b" style="left:1395.00px;top:297.00px;width:145.00px;height:68.00px;background:#181b1f;border:1px solid rgba(204,204,220,0.12);border-radius:2px;box-sizing:border-box;"></div>
<span class="t" style="left:1404.60px;top:306px;font-size:14.30px;line-height:16px;color:rgb(204,204,220);letter-spacing:-0.025px;-webkit-text-stroke:0.50px rgb(204,204,220);">RootFS ...</span>
<svg class="b" style="left:1491.95px;top:306.75px;color:rgb(141,142,152);" width="14.5" height="14.5" viewBox="0 0 24 24"><g fill="none" stroke="currentColor" stroke-width="2" stroke-linecap="round" stroke-linejoin="round"><circle cx="12" cy="12" r="9.600"/><path d="M12 11.200v5.600" stroke-width="2.300"/><path d="M12 7.400v.01" stroke-width="2.700"/></g></svg>
<span class="t" style="left:1446.30px;top:339px;font-size:15.60px;line-height:17px;color:rgb(204,204,220);letter-spacing:-1.130px;-webkit-text-stroke:0.45px rgb(204,204,220);">10</span>
<span class="t" style="left:1466.94px;top:340px;font-size:14.50px;line-height:16px;color:rgb(204,204,220);letter-spacing:-0.785px;-webkit-text-stroke:0.45px rgb(204,204,220);">GiB</span>
<div class="b" style="left:1548.00px;top:297.00px;width:145.00px;height:68.00px;background:#181b1f;border:1px solid rgba(204,204,220,0.12);border-radius:2px;box-sizing:border-box;"></div>
<span class="t" style="left:1557.60px;top:306px;font-size:14.30px;line-height:16px;color:rgb(204,204,220);letter-spacing:0.425px;-webkit-text-stroke:0.50px rgb(204,204,220);">RAM Total</span>
<svg class="b" style="left:1643.55px;top:306.75px;color:rgb(141,142,152);" width="14.5" height="14.5" viewBox="0 0 24 24"><g fill="none" stroke="currentColor" stroke-width="2" stroke-linecap="round" stroke-linejoin="round"><circle cx="12" cy="12" r="9.600"/><path d="M12 11.200v5.600" stroke-width="2.300"/><path d="M12 7.400v.01" stroke-width="2.700"/></g></svg>
<span class="t" style="left:1602.60px;top:339px;font-size:15.60px;line-height:17px;color:rgb(204,204,220);-webkit-text-stroke:0.45px rgb(204,204,220);">4</span>
<span class="t" style="left:1615.41px;top:340px;font-size:14.50px;line-height:16px;color:rgb(204,204,220);letter-spacing:-0.468px;-webkit-text-stroke:0.45px rgb(204,204,220);">GiB</span>
<div class="b" style="left:1701.00px;top:297.00px;width:145.00px;height:68.00px;background:#181b1f;border:1px solid rgba(204,204,220,0.12);border-radius:2px;box-sizing:border-box;"></div>
<span class="t" style="left:1710.60px;top:306px;font-size:14.30px;line-height:16px;color:rgb(204,204,220);letter-spacing:-0.022px;-webkit-text-stroke:0.50px rgb(204,204,220);">SWAP T...</span>
<svg class="b" style="left:1797.65px;top:306.75px;color:rgb(141,142,152);" width="14.5" height="14.5" viewBox="0 0 24 24"><g fill="none" stroke="currentColor" stroke-width="2" stroke-linecap="round" stroke-linejoin="round"><circle cx="12" cy="12" r="9.600"/><path d="M12 11.200v5.600" stroke-width="2.300"/><path d="M12 7.400v.01" stroke-width="2.700"/></g></svg>
<span class="t" style="left:1762.50px;top:339px;font-size:15.60px;line-height:17px;color:rgb(204,204,220);-webkit-text-stroke:0.45px rgb(204,204,220);">0</span>
<span class="t" style="left:1775.19px;top:340px;font-size:14.50px;line-height:16px;color:rgb(204,204,220);-webkit-text-stroke:0.45px rgb(204,204,220);">B</span>
<div class="b" style="left:16.00px;top:411.00px;width:911.00px;height:258.00px;background:#181b1f;border:1px solid rgba(204,204,220,0.12);border-radius:2px;box-sizing:border-box;"></div>
<span class="t" style="left:25.60px;top:420px;font-size:14.30px;line-height:16px;color:rgb(204,204,220);letter-spacing:0.103px;-webkit-text-stroke:0.50px rgb(204,204,220);">CPU Basic</span>
<svg class="b" style="left:112.55px;top:420.75px;color:rgb(141,142,152);" width="14.5" height="14.5" viewBox="0 0 24 24"><g fill="none" stroke="currentColor" stroke-width="2" stroke-linecap="round" stroke-linejoin="round"><circle cx="12" cy="12" r="9.600"/><path d="M12 11.200v5.600" stroke-width="2.300"/><path d="M12 7.400v.01" stroke-width="2.700"/></g></svg>
<svg class="b" style="left:0;top:0;pointer-events:none" width="1862" height="1013" viewBox="0 0 1862 1013"><rect x="690.700" y="459.700" width="219.700" height="156" fill="rgb(60,82,58)"/><rect x="690.700" y="615.200" width="219.700" height="0.700" fill="#96304a"/><rect x="784.0" y="615.200" width="5" height="0.700" fill="#6a2f8e"/><rect x="801.0" y="615.200" width="2" height="0.700" fill="#6a2f8e"/><rect x="865.0" y="615.200" width="4" height="0.700" fill="#6a2f8e"/><rect x="876.0" y="615.200" width="5" height="0.700" fill="#6a2f8e"/><rect x="901.0" y="615.200" width="2" height="0.700" fill="#6a2f8e"/><rect x="697.5" y="614.400" width="0.8" height="0.800" fill="#c9982c"/><rect x="704.5" y="614.400" width="1.5" height="0.800" fill="#c9982c"/><rect x="709.5" y="614.400" width="1.0" height="0.800" fill="#c9982c"/><rect x="713.5" y="614.400" width="2.5" height="0.800" fill="#c9982c"/><rect x="743.5" y="614.400" width="1.0" height="0.800" fill="#c9982c"/><rect x="746.5" y="614.400" width="1.5" height="0.800" fill="#c9982c"/><rect x="752.5" y="614.400" width="1.5" height="0.800" fill="#c9982c"/><rect x="760.0" y="614.400" width="2.5" height="0.800" fill="#c9982c"/><rect x="768.0" y="614.400" width="1.5" height="0.800" fill="#c9982c"/><rect x="772.0" y="614.400" width="1.5" height="0.800" fill="#c9982c"/><rect x="787.0" y="614.400" width="0.8" height="0.800" fill="#c9982c"/><rect x="796.0" y="614.400" width="1.5" height="0.800" fill="#c9982c"/><rect x="805.0" y="614.400" width="1.0" height="0.800" fill="#c9982c"/><rect x="814.0" y="614.400" width="2.5" height="0.800" fill="#c9982c"/><rect x="840.0" y="614.400" width="2.5" height="0.800" fill="#c9982c"/><rect x="855.5" y="614.400" width="1.0" height="0.800" fill="#c9982c"/><rect x="857.0" y="614.400" width="1.0" height="0.800" fill="#c9982c"/><rect x="863.0" y="614.400" width="1.0" height="0.800" fill="#c9982c"/><rect x="864.5" y="614.400" width="1.0" height="0.800" fill="#c9982c"/><rect x="873.5" y="614.400" width="1.5" height="0.800" fill="#c9982c"/><rect x="885.5" y="614.400" width="1.5" height="0.800" fill="#c9982c"/><rect x="891.5" y="614.400" width="1.5" height="0.800" fill="#c9982c"/><rect x="900.5" y="614.400" width="2.5" height="0.800" fill="#c9982c"/><rect x="903.5" y="614.400" width="2.5" height="0.800" fill="#c9982c"/><rect x="907.0" y="614.400" width="2.5" height="0.800" fill="#c9982c"/><rect x="61.50" y="460.00" width="849.10" height="1" fill="rgba(240,250,255,0.09)"/><rect x="61.50" y="491.00" width="849.10" height="1" fill="rgba(240,250,255,0.09)"/><rect x="61.50" y="522.00" width="849.10" height="1" fill="rgba(240,250,255,0.09)"/><rect x="61.50" y="553.00" width="849.10" height="1" fill="rgba(240,250,255,0.09)"/><rect x="61.50" y="584.00" width="849.10" height="1" fill="rgba(240,250,255,0.09)"/><rect x="61.50" y="615.00" width="849.10" height="1" fill="rgba(240,250,255,0.09)"/><rect x="111" y="460.00" width="1" height="160.00" fill="rgba(240,250,255,0.09)"/><rect x="181" y="460.00" width="1" height="160.00" fill="rgba(240,250,255,0.09)"/><rect x="251" y="460.00" width="1" height="160.00" fill="rgba(240,250,255,0.09)"/><rect x="322" y="460.00" width="1" height="160.00" fill="rgba(240,250,255,0.09)"/><rect x="392" y="460.00" width="1" height="160.00" fill="rgba(240,250,255,0.09)"/><rect x="463" y="460.00" width="1" height="160.00" fill="rgba(240,250,255,0.09)"/><rect x="533" y="460.00" width="1" height="160.00" fill="rgba(240,250,255,0.09)"/><rect x="603" y="460.00" width="1" height="160.00" fill="rgba(240,250,255,0.09)"/><rect x="674" y="460.00" width="1" height="160.00" fill="rgba(240,250,255,0.09)"/><rect x="744" y="460.00" width="1" height="160.00" fill="rgba(240,250,255,0.09)"/><rect x="815" y="460.00" width="1" height="160.00" fill="rgba(240,250,255,0.09)"/><rect x="885" y="460.00" width="1" height="160.00" fill="rgba(240,250,255,0.09)"/></svg>
<span class="t" style="left:25.70px;top:453px;font-size:12.30px;line-height:14px;color:rgb(204,204,220);transform-origin:0 0;transform:scaleX(0.9434);-webkit-text-stroke:0.22px rgb(204,204,220);">100%</span>
<span class="t" style="left:31.60px;top:484px;font-size:12.30px;line-height:14px;color:rgb(204,204,220);transform-origin:0 0;transform:scaleX(0.9673);-webkit-text-stroke:0.22px rgb(204,204,220);">80%</span>
<span class="t" style="left:31.60px;top:515px;font-size:12.30px;line-height:14px;color:rgb(204,204,220);transform-origin:0 0;transform:scaleX(0.9673);-webkit-text-stroke:0.22px rgb(204,204,220);">60%</span>
<span class="t" style="left:31.40px;top:546px;font-size:12.30px;line-height:14px;color:rgb(204,204,220);transform-origin:0 0;transform:scaleX(0.9755);-webkit-text-stroke:0.22px rgb(204,204,220);">40%</span>
<span class="t" style="left:31.60px;top:577px;font-size:12.30px;line-height:14px;color:rgb(204,204,220);transform-origin:0 0;transform:scaleX(0.9673);-webkit-text-stroke:0.22px rgb(204,204,220);">20%</span>
<span class="t" style="left:38.90px;top:608px;font-size:12.30px;line-height:14px;color:rgb(204,204,220);transform-origin:0 0;transform:scaleX(0.9239);-webkit-text-stroke:0.22px rgb(204,204,220);">0%</span>
<span class="t" style="left:94.90px;top:623px;font-size:12.30px;line-height:14px;color:rgb(204,204,220);letter-spacing:0.394px;-webkit-text-stroke:0.22px rgb(204,204,220);">20:00</span>
<span class="t" style="left:164.90px;top:623px;font-size:12.30px;line-height:14px;color:rgb(204,204,220);letter-spacing:0.394px;-webkit-text-stroke:0.22px rgb(204,204,220);">22:00</span>
<span class="t" style="left:234.90px;top:623px;font-size:12.30px;line-height:14px;color:rgb(204,204,220);letter-spacing:0.394px;-webkit-text-stroke:0.22px rgb(204,204,220);">00:00</span>
<span class="t" style="left:305.90px;top:623px;font-size:12.30px;line-height:14px;color:rgb(204,204,220);letter-spacing:0.394px;-webkit-text-stroke:0.22px rgb(204,204,220);">02:00</span>
<span class="t" style="left:375.90px;top:623px;font-size:12.30px;line-height:14px;color:rgb(204,204,220);letter-spacing:0.394px;-webkit-text-stroke:0.22px rgb(204,204,220);">04:00</span>
<span class="t" style="left:446.90px;top:623px;font-size:12.30px;line-height:14px;color:rgb(204,204,220);letter-spacing:0.394px;-webkit-text-stroke:0.22px rgb(204,204,220);">06:00</span>
<span class="t" style="left:516.90px;top:623px;font-size:12.30px;line-height:14px;color:rgb(204,204,220);letter-spacing:0.394px;-webkit-text-stroke:0.22px rgb(204,204,220);">08:00</span>
<span class="t" style="left:586.90px;top:623px;font-size:12.30px;line-height:14px;color:rgb(204,204,220);letter-spacing:0.394px;-webkit-text-stroke:0.22px rgb(204,204,220);">10:00</span>
<span class="t" style="left:657.90px;top:623px;font-size:12.30px;line-height:14px;color:rgb(204,204,220);letter-spacing:0.394px;-webkit-text-stroke:0.22px rgb(204,204,220);">12:00</span>
<span class="t" style="left:727.90px;top:623px;font-size:12.30px;line-height:14px;color:rgb(204,204,220);letter-spacing:0.394px;-webkit-text-stroke:0.22px rgb(204,204,220);">14:00</span>
<span class="t" style="left:798.90px;top:623px;font-size:12.30px;line-height:14px;color:rgb(204,204,220);letter-spacing:0.394px;-webkit-text-stroke:0.22px rgb(204,204,220);">16:00</span>
<span class="t" style="left:868.90px;top:623px;font-size:12.30px;line-height:14px;color:rgb(204,204,220);letter-spacing:0.394px;-webkit-text-stroke:0.22px rgb(204,204,220);">18:00</span>
<div class="b" style="left:29.00px;top:648.80px;width:14.00px;height:4.00px;background:#EAB839;border-radius:2px;"></div>
<span class="t" style="left:51.00px;top:644px;font-size:12.30px;line-height:14px;color:rgb(204,204,220);letter-spacing:0.300px;-webkit-text-stroke:0.22px rgb(204,204,220);">Busy System</span>
<div class="b" style="left:136.00px;top:648.80px;width:14.00px;height:4.00px;background:#0A437C;border-radius:2px;"></div>
<span class="t" style="left:158.50px;top:644px;font-size:12.30px;line-height:14px;color:rgb(204,204,220);letter-spacing:0.188px;-webkit-text-stroke:0.22px rgb(204,204,220);">Busy User</span>
<div class="b" style="left:227.00px;top:648.80px;width:14.00px;height:4.00px;background:#890F02;border-radius:2px;"></div>
<span class="t" style="left:249.00px;top:644px;font-size:12.30px;line-height:14px;color:rgb(204,204,220);letter-spacing:0.338px;-webkit-text-stroke:0.22px rgb(204,204,220);">Busy Iowait</span>
<div class="b" style="left:325.00px;top:648.80px;width:14.00px;height:4.00px;background:#FF780A;border-radius:2px;"></div>
<span class="t" style="left:347.50px;top:644px;font-size:12.30px;line-height:14px;color:rgb(204,204,220);letter-spacing:-0.062px;-webkit-text-stroke:0.22px rgb(204,204,220);">Busy IRQs</span>
<div class="b" style="left:416.00px;top:648.80px;width:14.00px;height:4.00px;background:#6D1F62;border-radius:2px;"></div>
<span class="t" style="left:438.50px;top:644px;font-size:12.30px;line-height:14px;color:rgb(204,204,220);letter-spacing:0.250px;-webkit-text-stroke:0.22px rgb(204,204,220);">Busy Other</span>
<div class="b" style="left:512.50px;top:648.80px;width:14.00px;height:4.00px;background:#7EB26D;border-radius:2px;"></div>
<span class="t" style="left:534.50px;top:644px;font-size:12.30px;line-height:14px;color:rgb(204,204,220);letter-spacing:0.417px;-webkit-text-stroke:0.22px rgb(204,204,220);">Idle</span>
<div class="b" style="left:935.00px;top:411.00px;width:911.00px;height:258.00px;background:#181b1f;border:1px solid rgba(204,204,220,0.12);border-radius:2px;box-sizing:border-box;"></div>
<span class="t" style="left:944.60px;top:420px;font-size:14.30px;line-height:16px;color:rgb(204,204,220);letter-spacing:0.468px;-webkit-text-stroke:0.50px rgb(204,204,220);">Memory Basic</span>
<svg class="b" style="left:1057.25px;top:420.75px;color:rgb(141,142,152);" width="14.5" height="14.5" viewBox="0 0 24 24"><g fill="none" stroke="currentColor" stroke-width="2" stroke-linecap="round" stroke-linejoin="round"><circle cx="12" cy="12" r="9.600"/><path d="M12 11.200v5.600" stroke-width="2.300"/><path d="M12 7.400v.01" stroke-width="2.700"/></g></svg>
<svg class="b" style="left:0;top:0;pointer-events:none" width="1862" height="1013" viewBox="0 0 1862 1013"><rect x="1610.600" y="477.500" width="218.400" height="90" fill="rgb(60,82,58)"/><rect x="1610.600" y="567.300" width="218.400" height="40" fill="rgb(16,30,46)"/><path d="M1610.600 606.400H1679.700V604.800H1829V615.800H1610.600Z" fill="rgb(112,94,24)"/><path d="M1610.600 606.400H1679.700V604.800H1829" stroke="#b89a1c" stroke-width="0.700" fill="none"/><rect x="1610.600" y="476.600" width="218.400" height="1" fill="#c2301a"/><rect x="981.50" y="470.00" width="848.00" height="1" fill="rgba(240,250,255,0.09)"/><rect x="981.50" y="506.25" width="848.00" height="1" fill="rgba(240,250,255,0.09)"/><rect x="981.50" y="542.50" width="848.00" height="1" fill="rgba(240,250,255,0.09)"/><rect x="981.50" y="578.75" width="848.00" height="1" fill="rgba(240,250,255,0.09)"/><rect x="981.50" y="615.00" width="848.00" height="1" fill="rgba(240,250,255,0.09)"/><rect x="1031" y="460.00" width="1" height="160.00" fill="rgba(240,250,255,0.09)"/><rect x="1101" y="460.00" width="1" height="160.00" fill="rgba(240,250,255,0.09)"/><rect x="1171" y="460.00" width="1" height="160.00" fill="rgba(240,250,255,0.09)"/><rect x="1242" y="460.00" width="1" height="160.00" fill="rgba(240,250,255,0.09)"/><rect x="1312" y="460.00" width="1" height="160.00" fill="rgba(240,250,255,0.09)"/><rect x="1382" y="460.00" width="1" height="160.00" fill="rgba(240,250,255,0.09)"/><rect x="1453" y="460.00" width="1" height="160.00" fill="rgba(240,250,255,0.09)"/><rect x="1523" y="460.00" width="1" height="160.00" fill="rgba(240,250,255,0.09)"/><rect x="1593" y="460.00" width="1" height="160.00" fill="rgba(240,250,255,0.09)"/><rect x="1664" y="460.00" width="1" height="160.00" fill="rgba(240,250,255,0.09)"/><rect x="1734" y="460.00" width="1" height="160.00" fill="rgba(240,250,255,0.09)"/><rect x="1804" y="460.00" width="1" height="160.00" fill="rgba(240,250,255,0.09)"/></svg>
<span class="t" style="left:945.00px;top:463px;font-size:12.30px;line-height:14px;color:rgb(204,204,220);transform-origin:0 0;transform:scaleX(0.9992);-webkit-text-stroke:0.22px rgb(204,204,220);">4 GiB</span>
<span class="t" style="left:945.60px;top:499px;font-size:12.30px;line-height:14px;color:rgb(204,204,220);transform-origin:0 0;transform:scaleX(0.9796);-webkit-text-stroke:0.22px rgb(204,204,220);">3 GiB</span>
<span class="t" style="left:945.60px;top:536px;font-size:12.30px;line-height:14px;color:rgb(204,204,220);transform-origin:0 0;transform:scaleX(0.9796);-webkit-text-stroke:0.22px rgb(204,204,220);">2 GiB</span>
<span class="t" style="left:947.00px;top:572px;font-size:12.30px;line-height:14px;color:rgb(204,204,220);transform-origin:0 0;transform:scaleX(0.9339);-webkit-text-stroke:0.22px rgb(204,204,220);">1 GiB</span>
<span class="t" style="left:957.10px;top:608px;font-size:12.30px;line-height:14px;color:rgb(204,204,220);transform-origin:0 0;transform:scaleX(1.0068);-webkit-text-stroke:0.22px rgb(204,204,220);">0 B</span>
<span class="t" style="left:1014.90px;top:623px;font-size:12.30px;line-height:14px;color:rgb(204,204,220);letter-spacing:0.394px;-webkit-text-stroke:0.22px rgb(204,204,220);">20:00</span>
<span class="t" style="left:1084.90px;top:623px;font-size:12.30px;line-height:14px;color:rgb(204,204,220);letter-spacing:0.394px;-webkit-text-stroke:0.22px rgb(204,204,220);">22:00</span>
<span class="t" style="left:1154.90px;top:623px;font-size:12.30px;line-height:14px;color:rgb(204,204,220);letter-spacing:0.394px;-webkit-text-stroke:0.22px rgb(204,204,220);">00:00</span>
<span class="t" style="left:1225.90px;top:623px;font-size:12.30px;line-height:14px;color:rgb(204,204,220);letter-spacing:0.394px;-webkit-text-stroke:0.22px rgb(204,204,220);">02:00</span>
<span class="t" style="left:1295.90px;top:623px;font-size:12.30px;line-height:14px;color:rgb(204,204,220);letter-spacing:0.394px;-webkit-text-stroke:0.22px rgb(204,204,220);">04:00</span>
<span class="t" style="left:1365.90px;top:623px;font-size:12.30px;line-height:14px;color:rgb(204,204,220);letter-spacing:0.394px;-webkit-text-stroke:0.22px rgb(204,204,220);">06:00</span>
<span class="t" style="left:1436.90px;top:623px;font-size:12.30px;line-height:14px;color:rgb(204,204,220);letter-spacing:0.394px;-webkit-text-stroke:0.22px rgb(204,204,220);">08:00</span>
<span class="t" style="left:1506.90px;top:623px;font-size:12.30px;line-height:14px;color:rgb(204,204,220);letter-spacing:0.394px;-webkit-text-stroke:0.22px rgb(204,204,220);">10:00</span>
<span class="t" style="left:1576.90px;top:623px;font-size:12.30px;line-height:14px;color:rgb(204,204,220);letter-spacing:0.394px;-webkit-text-stroke:0.22px rgb(204,204,220);">12:00</span>
<span class="t" style="left:1647.90px;top:623px;font-size:12.30px;line-height:14px;color:rgb(204,204,220);letter-spacing:0.394px;-webkit-text-stroke:0.22px rgb(204,204,220);">14:00</span>
<span class="t" style="left:1717.90px;top:623px;font-size:12.30px;line-height:14px;color:rgb(204,204,220);letter-spacing:0.394px;-webkit-text-stroke:0.22px rgb(204,204,220);">16:00</span>
<span class="t" style="left:1787.90px;top:623px;font-size:12.30px;line-height:14px;color:rgb(204,204,220);letter-spacing:0.394px;-webkit-text-stroke:0.22px rgb(204,204,220);">18:00</span>
<div class="b" style="left:948.00px;top:648.80px;width:14.00px;height:4.00px;background:#E0F9D7;border-radius:2px;"></div>
<span class="t" style="left:970.00px;top:644px;font-size:12.30px;line-height:14px;color:rgb(204,204,220);letter-spacing:0.219px;-webkit-text-stroke:0.22px rgb(204,204,220);">RAM Total</span>
<div class="b" style="left:1039.00px;top:648.80px;width:14.00px;height:4.00px;background:#F2CC0C;border-radius:2px;"></div>
<span class="t" style="left:1061.00px;top:644px;font-size:12.30px;line-height:14px;color:rgb(204,204,220);letter-spacing:0.036px;-webkit-text-stroke:0.22px rgb(204,204,220);">RAM Used</span>
<div class="b" style="left:1131.00px;top:648.80px;width:14.00px;height:4.00px;background:#052B51;border-radius:2px;"></div>
<span class="t" style="left:1153.00px;top:644px;font-size:12.30px;line-height:14px;color:rgb(204,204,220);letter-spacing:0.265px;-webkit-text-stroke:0.22px rgb(204,204,220);">RAM Cache + Buffer</span>
<div class="b" style="left:1281.00px;top:648.80px;width:14.00px;height:4.00px;background:#7EB26D;border-radius:2px;"></div>
<span class="t" style="left:1303.00px;top:644px;font-size:12.30px;line-height:14px;color:rgb(204,204,220);letter-spacing:-0.054px;-webkit-text-stroke:0.22px rgb(204,204,220);">RAM Free</span>
<div class="b" style="left:1369.00px;top:648.80px;width:14.00px;height:4.00px;background:#BF1B00;border-radius:2px;"></div>
<span class="t" style="left:1391.00px;top:644px;font-size:12.30px;line-height:14px;color:rgb(204,204,220);letter-spacing:0.016px;-webkit-text-stroke:0.22px rgb(204,204,220);">SWAP Used</span>
<div class="b" style="left:16.00px;top:677.00px;width:911.00px;height:258.00px;background:#181b1f;border:1px solid rgba(204,204,220,0.12);border-radius:2px;box-sizing:border-box;"></div>
<span class="t" style="left:25.60px;top:686px;font-size:14.30px;line-height:16px;color:rgb(204,204,220);letter-spacing:0.614px;-webkit-text-stroke:0.50px rgb(204,204,220);">Network Traffic Basic</span>
<svg class="b" style="left:188.75px;top:686.75px;color:rgb(141,142,152);" width="14.5" height="14.5" viewBox="0 0 24 24"><g fill="none" stroke="currentColor" stroke-width="2" stroke-linecap="round" stroke-linejoin="round"><circle cx="12" cy="12" r="9.600"/><path d="M12 11.200v5.600" stroke-width="2.300"/><path d="M12 7.400v.01" stroke-width="2.700"/></g></svg>
<svg class="b" style="left:0;top:0;pointer-events:none" width="1862" height="1013" viewBox="0 0 1862 1013"><path d="M695.500 751.500L695.5 741.2 L696.5 742.5 L698.5 745.2 L707.5 745.2 L709.5 740.4 L711.0 740.8 L712.6 742.0 L714.2 740.8 L715.8 740.8 L717.4 742.0 L719.0 742.0 L720.6 741.2 L722.2 741.2 L723.8 742.0 L725.4 740.8 L727.0 742.0 L728.6 741.2 L730.2 740.4 L731.8 740.8 L733.4 741.8 L734.5 740.8 L735.8 745.2 L737.5 744.4 L739.0 745.2 L740.5 745.2 L742.0 745.2 L743.5 745.2 L745.0 744.0 L746.5 745.2 L748.0 744.4 L749.5 745.2 L751.0 745.2 L752.5 745.2 L754.0 745.2 L755.5 745.2 L757.0 745.2 L758.5 745.2 L760.0 745.2 L761.5 745.2 L763.0 745.2 L764.5 745.2 L766.0 745.2 L767.5 745.2 L769.0 745.2 L770.5 744.4 L772.0 745.2 L773.5 745.2 L775.0 745.2 L776.5 745.2 L778.0 745.2 L779.5 745.2 L781.0 744.4 L782.5 745.2 L784.0 745.2 L785.5 745.2 L787.0 745.2 L788.5 745.2 L790.0 745.2 L791.5 745.2 L793.0 745.2 L794.5 745.2 L796.0 745.2 L797.5 745.2 L799.0 745.2 L800.5 745.2 L802.0 745.2 L803.5 744.4 L805.0 745.2 L806.5 745.2 L808.0 745.2 L809.5 745.2 L811.0 745.2 L812.5 745.2 L814.0 744.4 L815.5 745.2 L817.0 745.2 L818.5 745.2 L820.0 745.2 L821.5 745.2 L823.0 745.2 L824.5 745.2 L826.0 745.2 L827.5 745.2 L829.0 745.2 L830.5 745.2 L832.0 745.2 L833.5 745.2 L835.0 745.2 L836.5 744.4 L838.0 743.3 L839.5 745.2 L841.0 745.2 L842.5 745.2 L844.0 745.2 L845.5 745.2 L847.0 744.4 L848.5 745.2 L850.0 745.2 L851.5 745.2 L853.0 745.2 L854.5 745.2 L856.0 745.2 L857.5 745.2 L859.0 745.2 L860.5 745.2 L862.0 745.2 L863.5 745.2 L865.0 745.2 L866.5 745.2 L868.0 745.2 L869.5 744.4 L871.0 745.2 L872.5 745.2 L874.0 745.2 L876.2 744.4 L896.5 744.4 L898.4 741.2 L900.5 744.2 L910.2 744.2 L910.200 751.500Z" fill="rgb(55,82,56)"/><path d="M695.5 741.2 L696.5 742.5 L698.5 745.2 L707.5 745.2 L709.5 740.4 L711.0 740.8 L712.6 742.0 L714.2 740.8 L715.8 740.8 L717.4 742.0 L719.0 742.0 L720.6 741.2 L722.2 741.2 L723.8 742.0 L725.4 740.8 L727.0 742.0 L728.6 741.2 L730.2 740.4 L731.8 740.8 L733.4 741.8 L734.5 740.8 L735.8 745.2 L737.5 744.4 L739.0 745.2 L740.5 745.2 L742.0 745.2 L743.5 745.2 L745.0 744.0 L746.5 745.2 L748.0 744.4 L749.5 745.2 L751.0 745.2 L752.5 745.2 L754.0 745.2 L755.5 745.2 L757.0 745.2 L758.5 745.2 L760.0 745.2 L761.5 745.2 L763.0 745.2 L764.5 745.2 L766.0 745.2 L767.5 745.2 L769.0 745.2 L770.5 744.4 L772.0 745.2 L773.5 745.2 L775.0 745.2 L776.5 745.2 L778.0 745.2 L779.5 745.2 L781.0 744.4 L782.5 745.2 L784.0 745.2 L785.5 745.2 L787.0 745.2 L788.5 745.2 L790.0 745.2 L791.5 745.2 L793.0 745.2 L794.5 745.2 L796.0 745.2 L797.5 745.2 L799.0 745.2 L800.5 745.2 L802.0 745.2 L803.5 744.4 L805.0 745.2 L806.5 745.2 L808.0 745.2 L809.5 745.2 L811.0 745.2 L812.5 745.2 L814.0 744.4 L815.5 745.2 L817.0 745.2 L818.5 745.2 L820.0 745.2 L821.5 745.2 L823.0 745.2 L824.5 745.2 L826.0 745.2 L827.5 745.2 L829.0 745.2 L830.5 745.2 L832.0 745.2 L833.5 745.2 L835.0 745.2 L836.5 744.4 L838.0 743.3 L839.5 745.2 L841.0 745.2 L842.5 745.2 L844.0 745.2 L845.5 745.2 L847.0 744.4 L848.5 745.2 L850.0 745.2 L851.5 745.2 L853.0 745.2 L854.5 745.2 L856.0 745.2 L857.5 745.2 L859.0 745.2 L860.5 745.2 L862.0 745.2 L863.5 745.2 L865.0 745.2 L866.5 745.2 L868.0 745.2 L869.5 744.4 L871.0 745.2 L872.5 745.2 L874.0 745.2 L876.2 744.4 L896.5 744.4 L898.4 741.2 L900.5 744.2 L910.2 744.2" stroke="#5f9e57" stroke-width="0.800" fill="none"/><rect x="695.500" y="751.800" width="214.700" height="112.800" fill="rgb(65,84,117)"/><rect x="695.500" y="750.800" width="214.700" height="1.200" fill="#e58a2e"/><rect x="695.500" y="863.800" width="214.700" height="1" fill="#6f9be0"/><rect x="78.50" y="751.00" width="832.10" height="1" fill="rgba(240,250,255,0.09)"/><rect x="78.50" y="782.00" width="832.10" height="1" fill="rgba(240,250,255,0.09)"/><rect x="78.50" y="813.00" width="832.10" height="1" fill="rgba(240,250,255,0.09)"/><rect x="78.50" y="844.00" width="832.10" height="1" fill="rgba(240,250,255,0.09)"/><rect x="78.50" y="875.00" width="832.10" height="1" fill="rgba(240,250,255,0.09)"/><rect x="127" y="726.50" width="1" height="158.50" fill="rgba(240,250,255,0.09)"/><rect x="196" y="726.50" width="1" height="158.50" fill="rgba(240,250,255,0.09)"/><rect x="265" y="726.50" width="1" height="158.50" fill="rgba(240,250,255,0.09)"/><rect x="334" y="726.50" width="1" height="158.50" fill="rgba(240,250,255,0.09)"/><rect x="403" y="726.50" width="1" height="158.50" fill="rgba(240,250,255,0.09)"/><rect x="472" y="726.50" width="1" height="158.50" fill="rgba(240,250,255,0.09)"/><rect x="541" y="726.50" width="1" height="158.50" fill="rgba(240,250,255,0.09)"/><rect x="610" y="726.50" width="1" height="158.50" fill="rgba(240,250,255,0.09)"/><rect x="679" y="726.50" width="1" height="158.50" fill="rgba(240,250,255,0.09)"/><rect x="748" y="726.50" width="1" height="158.50" fill="rgba(240,250,255,0.09)"/><rect x="817" y="726.50" width="1" height="158.50" fill="rgba(240,250,255,0.09)"/><rect x="886" y="726.50" width="1" height="158.50" fill="rgba(240,250,255,0.09)"/></svg>
<span class="t" style="left:44.30px;top:744px;font-size:12.30px;line-height:14px;color:rgb(204,204,220);transform-origin:0 0;transform:scaleX(1.0830);-webkit-text-stroke:0.22px rgb(204,204,220);">0 b/s</span>
<span class="t" style="left:32.90px;top:775px;font-size:12.30px;line-height:14px;color:rgb(204,204,220);transform-origin:0 0;transform:scaleX(1.0912);-webkit-text-stroke:0.22px rgb(204,204,220);">-5 kb/s</span>
<span class="t" style="left:26.80px;top:806px;font-size:12.30px;line-height:14px;color:rgb(204,204,220);transform-origin:0 0;transform:scaleX(1.0590);-webkit-text-stroke:0.22px rgb(204,204,220);">-10 kb/s</span>
<span class="t" style="left:26.80px;top:837px;font-size:12.30px;line-height:14px;color:rgb(204,204,220);transform-origin:0 0;transform:scaleX(1.0590);-webkit-text-stroke:0.22px rgb(204,204,220);">-15 kb/s</span>
<span class="t" style="left:25.70px;top:868px;font-size:12.30px;line-height:14px;color:rgb(204,204,220);transform-origin:0 0;transform:scaleX(1.0842);-webkit-text-stroke:0.22px rgb(204,204,220);">-20 kb/s</span>
<span class="t" style="left:110.90px;top:889px;font-size:12.30px;line-height:14px;color:rgb(204,204,220);letter-spacing:0.394px;-webkit-text-stroke:0.22px rgb(204,204,220);">20:00</span>
<span class="t" style="left:179.90px;top:889px;font-size:12.30px;line-height:14px;color:rgb(204,204,220);letter-spacing:0.394px;-webkit-text-stroke:0.22px rgb(204,204,220);">22:00</span>
<span class="t" style="left:248.90px;top:889px;font-size:12.30px;line-height:14px;color:rgb(204,204,220);letter-spacing:0.394px;-webkit-text-stroke:0.22px rgb(204,204,220);">00:00</span>
<span class="t" style="left:317.90px;top:889px;font-size:12.30px;line-height:14px;color:rgb(204,204,220);letter-spacing:0.394px;-webkit-text-stroke:0.22px rgb(204,204,220);">02:00</span>
<span class="t" style="left:386.90px;top:889px;font-size:12.30px;line-height:14px;color:rgb(204,204,220);letter-spacing:0.394px;-webkit-text-stroke:0.22px rgb(204,204,220);">04:00</span>
<span class="t" style="left:455.90px;top:889px;font-size:12.30px;line-height:14px;color:rgb(204,204,220);letter-spacing:0.394px;-webkit-text-stroke:0.22px rgb(204,204,220);">06:00</span>
<span class="t" style="left:524.90px;top:889px;font-size:12.30px;line-height:14px;color:rgb(204,204,220);letter-spacing:0.394px;-webkit-text-stroke:0.22px rgb(204,204,220);">08:00</span>
<span class="t" style="left:593.90px;top:889px;font-size:12.30px;line-height:14px;color:rgb(204,204,220);letter-spacing:0.394px;-webkit-text-stroke:0.22px rgb(204,204,220);">10:00</span>
<span class="t" style="left:662.90px;top:889px;font-size:12.30px;line-height:14px;color:rgb(204,204,220);letter-spacing:0.394px;-webkit-text-stroke:0.22px rgb(204,204,220);">12:00</span>
<span class="t" style="left:731.90px;top:889px;font-size:12.30px;line-height:14px;color:rgb(204,204,220);letter-spacing:0.394px;-webkit-text-stroke:0.22px rgb(204,204,220);">14:00</span>
<span class="t" style="left:800.90px;top:889px;font-size:12.30px;line-height:14px;color:rgb(204,204,220);letter-spacing:0.394px;-webkit-text-stroke:0.22px rgb(204,204,220);">16:00</span>
<span class="t" style="left:869.90px;top:889px;font-size:12.30px;line-height:14px;color:rgb(204,204,220);letter-spacing:0.394px;-webkit-text-stroke:0.22px rgb(204,204,220);">18:00</span>
<div class="b" style="left:29.00px;top:915.00px;width:14.00px;height:4.00px;background:#73BF69;border-radius:2px;"></div>
<span class="t" style="left:51.00px;top:910px;font-size:12.30px;line-height:14px;color:rgb(204,204,220);letter-spacing:0.325px;-webkit-text-stroke:0.22px rgb(204,204,220);">recv ens160</span>
<div class="b" style="left:131.00px;top:915.00px;width:14.00px;height:4.00px;background:#F2CC0C;border-radius:2px;"></div>
<span class="t" style="left:153.50px;top:910px;font-size:12.30px;line-height:14px;color:rgb(204,204,220);letter-spacing:0.396px;-webkit-text-stroke:0.22px rgb(204,204,220);">recv lo</span>
<div class="b" style="left:202.00px;top:915.00px;width:14.00px;height:4.00px;background:#8AB8FF;border-radius:2px;"></div>
<span class="t" style="left:224.50px;top:910px;font-size:12.30px;line-height:14px;color:rgb(204,204,220);letter-spacing:0.284px;-webkit-text-stroke:0.22px rgb(204,204,220);">trans ens160</span>
<div class="b" style="left:309.50px;top:915.00px;width:14.00px;height:4.00px;background:#FF780A;border-radius:2px;"></div>
<span class="t" style="left:331.50px;top:910px;font-size:12.30px;line-height:14px;color:rgb(204,204,220);letter-spacing:0.339px;-webkit-text-stroke:0.22px rgb(204,204,220);">trans lo</span>
<div class="b" style="left:935.00px;top:677.00px;width:911.00px;height:258.00px;background:#181b1f;border:1px solid rgba(204,204,220,0.12);border-radius:2px;box-sizing:border-box;"></div>
<span class="t" style="left:944.60px;top:686px;font-size:14.30px;line-height:16px;color:rgb(204,204,220);letter-spacing:0.314px;-webkit-text-stroke:0.50px rgb(204,204,220);">Disk Space Used Basic</span>
<svg class="b" style="left:1116.25px;top:686.75px;color:rgb(141,142,152);" width="14.5" height="14.5" viewBox="0 0 24 24"><g fill="none" stroke="currentColor" stroke-width="2" stroke-linecap="round" stroke-linejoin="round"><circle cx="12" cy="12" r="9.600"/><path d="M12 11.200v5.600" stroke-width="2.300"/><path d="M12 7.400v.01" stroke-width="2.700"/></g></svg>
<svg class="b" style="left:0;top:0;pointer-events:none" width="1862" height="1013" viewBox="0 0 1862 1013"><rect x="1609.600" y="823.300" width="219.400" height="58.200" fill="rgb(56,89,57)"/><rect x="1609.600" y="860.400" width="219.400" height="21.100" fill="rgb(128,134,38)"/><rect x="1609.600" y="822.800" width="219.400" height="1" fill="#5fa357"/><rect x="1609.600" y="859.900" width="219.400" height="1.100" fill="#dcbe1a"/><rect x="1609.600" y="880.900" width="219.400" height="0.900" fill="#a585b8"/><rect x="980.20" y="726.00" width="849.30" height="1" fill="rgba(240,250,255,0.09)"/><rect x="980.20" y="757.00" width="849.30" height="1" fill="rgba(240,250,255,0.09)"/><rect x="980.20" y="788.00" width="849.30" height="1" fill="rgba(240,250,255,0.09)"/><rect x="980.20" y="819.00" width="849.30" height="1" fill="rgba(240,250,255,0.09)"/><rect x="980.20" y="850.00" width="849.30" height="1" fill="rgba(240,250,255,0.09)"/><rect x="980.20" y="881.00" width="849.30" height="1" fill="rgba(240,250,255,0.09)"/><rect x="1030" y="726.00" width="1" height="159.50" fill="rgba(240,250,255,0.09)"/><rect x="1100" y="726.00" width="1" height="159.50" fill="rgba(240,250,255,0.09)"/><rect x="1171" y="726.00" width="1" height="159.50" fill="rgba(240,250,255,0.09)"/><rect x="1241" y="726.00" width="1" height="159.50" fill="rgba(240,250,255,0.09)"/><rect x="1311" y="726.00" width="1" height="159.50" fill="rgba(240,250,255,0.09)"/><rect x="1382" y="726.00" width="1" height="159.50" fill="rgba(240,250,255,0.09)"/><rect x="1452" y="726.00" width="1" height="159.50" fill="rgba(240,250,255,0.09)"/><rect x="1522" y="726.00" width="1" height="159.50" fill="rgba(240,250,255,0.09)"/><rect x="1593" y="726.00" width="1" height="159.50" fill="rgba(240,250,255,0.09)"/><rect x="1663" y="726.00" width="1" height="159.50" fill="rgba(240,250,255,0.09)"/><rect x="1734" y="726.00" width="1" height="159.50" fill="rgba(240,250,255,0.09)"/><rect x="1804" y="726.00" width="1" height="159.50" fill="rgba(240,250,255,0.09)"/></svg>
<span class="t" style="left:944.60px;top:719px;font-size:12.30px;line-height:14px;color:rgb(204,204,220);transform-origin:0 0;transform:scaleX(0.9434);-webkit-text-stroke:0.22px rgb(204,204,220);">100%</span>
<span class="t" style="left:950.50px;top:750px;font-size:12.30px;line-height:14px;color:rgb(204,204,220);transform-origin:0 0;transform:scaleX(0.9673);-webkit-text-stroke:0.22px rgb(204,204,220);">80%</span>
<span class="t" style="left:950.50px;top:781px;font-size:12.30px;line-height:14px;color:rgb(204,204,220);transform-origin:0 0;transform:scaleX(0.9673);-webkit-text-stroke:0.22px rgb(204,204,220);">60%</span>
<span class="t" style="left:950.30px;top:812px;font-size:12.30px;line-height:14px;color:rgb(204,204,220);transform-origin:0 0;transform:scaleX(0.9755);-webkit-text-stroke:0.22px rgb(204,204,220);">40%</span>
<span class="t" style="left:950.50px;top:843px;font-size:12.30px;line-height:14px;color:rgb(204,204,220);transform-origin:0 0;transform:scaleX(0.9673);-webkit-text-stroke:0.22px rgb(204,204,220);">20%</span>
<span class="t" style="left:957.80px;top:874px;font-size:12.30px;line-height:14px;color:rgb(204,204,220);transform-origin:0 0;transform:scaleX(0.9239);-webkit-text-stroke:0.22px rgb(204,204,220);">0%</span>
<span class="t" style="left:1013.90px;top:889px;font-size:12.30px;line-height:14px;color:rgb(204,204,220);letter-spacing:0.394px;-webkit-text-stroke:0.22px rgb(204,204,220);">20:00</span>
<span class="t" style="left:1083.90px;top:889px;font-size:12.30px;line-height:14px;color:rgb(204,204,220);letter-spacing:0.394px;-webkit-text-stroke:0.22px rgb(204,204,220);">22:00</span>
<span class="t" style="left:1154.90px;top:889px;font-size:12.30px;line-height:14px;color:rgb(204,204,220);letter-spacing:0.394px;-webkit-text-stroke:0.22px rgb(204,204,220);">00:00</span>
<span class="t" style="left:1224.90px;top:889px;font-size:12.30px;line-height:14px;color:rgb(204,204,220);letter-spacing:0.394px;-webkit-text-stroke:0.22px rgb(204,204,220);">02:00</span>
<span class="t" style="left:1294.90px;top:889px;font-size:12.30px;line-height:14px;color:rgb(204,204,220);letter-spacing:0.394px;-webkit-text-stroke:0.22px rgb(204,204,220);">04:00</span>
<span class="t" style="left:1365.90px;top:889px;font-size:12.30px;line-height:14px;color:rgb(204,204,220);letter-spacing:0.394px;-webkit-text-stroke:0.22px rgb(204,204,220);">06:00</span>
<span class="t" style="left:1435.90px;top:889px;font-size:12.30px;line-height:14px;color:rgb(204,204,220);letter-spacing:0.394px;-webkit-text-stroke:0.22px rgb(204,204,220);">08:00</span>
<span class="t" style="left:1505.90px;top:889px;font-size:12.30px;line-height:14px;color:rgb(204,204,220);letter-spacing:0.394px;-webkit-text-stroke:0.22px rgb(204,204,220);">10:00</span>
<span class="t" style="left:1576.90px;top:889px;font-size:12.30px;line-height:14px;color:rgb(204,204,220);letter-spacing:0.394px;-webkit-text-stroke:0.22px rgb(204,204,220);">12:00</span>
<span class="t" style="left:1646.90px;top:889px;font-size:12.30px;line-height:14px;color:rgb(204,204,220);letter-spacing:0.394px;-webkit-text-stroke:0.22px rgb(204,204,220);">14:00</span>
<span class="t" style="left:1717.90px;top:889px;font-size:12.30px;line-height:14px;color:rgb(204,204,220);letter-spacing:0.394px;-webkit-text-stroke:0.22px rgb(204,204,220);">16:00</span>
<span class="t" style="left:1787.90px;top:889px;font-size:12.30px;line-height:14px;color:rgb(204,204,220);letter-spacing:0.394px;-webkit-text-stroke:0.22px rgb(204,204,220);">18:00</span>
<div class="b" style="left:948.00px;top:915.00px;width:14.00px;height:4.00px;background:#73BF69;border-radius:2px;"></div>
<span class="t" style="left:970.00px;top:910px;font-size:12.30px;line-height:14px;color:rgb(204,204,220);-webkit-text-stroke:0.22px rgb(204,204,220);">/</span>
<div class="b" style="left:984.00px;top:915.00px;width:14.00px;height:4.00px;background:#F2CC0C;border-radius:2px;"></div>
<span class="t" style="left:1006.00px;top:910px;font-size:12.30px;line-height:14px;color:rgb(204,204,220);letter-spacing:0.938px;-webkit-text-stroke:0.22px rgb(204,204,220);">/boot</span>
<div class="b" style="left:1048.00px;top:915.00px;width:14.00px;height:4.00px;background:#8AB8FF;border-radius:2px;"></div>
<span class="t" style="left:1069.50px;top:910px;font-size:12.30px;line-height:14px;color:rgb(204,204,220);letter-spacing:0.625px;-webkit-text-stroke:0.22px rgb(204,204,220);">/run</span>
<div class="b" style="left:1103.00px;top:915.00px;width:14.00px;height:4.00px;background:#FF780A;border-radius:2px;"></div>
<span class="t" style="left:1124.50px;top:910px;font-size:12.30px;line-height:14px;color:rgb(204,204,220);letter-spacing:0.578px;-webkit-text-stroke:0.22px rgb(204,204,220);">/run/lock</span>
<div class="b" style="left:1186.00px;top:915.00px;width:14.00px;height:4.00px;background:#F2495C;border-radius:2px;"></div>
<span class="t" style="left:1208.00px;top:910px;font-size:12.30px;line-height:14px;color:rgb(204,204,220);letter-spacing:0.521px;-webkit-text-stroke:0.22px rgb(204,204,220);">/run/snapd/ns</span>
<div class="b" style="left:1299.00px;top:915.00px;width:14.00px;height:4.00px;background:#5794F2;border-radius:2px;"></div>
<span class="t" style="left:1321.00px;top:910px;font-size:12.30px;line-height:14px;color:rgb(204,204,220);letter-spacing:0.462px;-webkit-text-stroke:0.22px rgb(204,204,220);">/run/user/1000</span>
<div class="b" style="left:16.00px;top:943.00px;width:1830.00px;height:30.00px;background:#181b1f;border-radius:2px;"></div>
<svg class="b" style="left:21.00px;top:952.80px;color:rgb(204,204,220);" width="14" height="14" viewBox="0 0 24 24"><g fill="none" stroke="currentColor" stroke-width="2" stroke-linecap="round" stroke-linejoin="round"><path d="M10 7l5 5-5 5"/></g></svg>
<span class="t" style="left:36.50px;top:949px;font-size:16.30px;line-height:18px;color:rgb(204,204,220);letter-spacing:0.536px;-webkit-text-stroke:0.75px rgb(204,204,220);">CPU / Memory / Net / Disk</span>
<span class="t" style="left:258.00px;top:953px;font-size:12.30px;line-height:14px;color:rgb(141,142,152);letter-spacing:0.278px;font-style:italic;-webkit-text-stroke:0.22px rgb(141,142,152);">(8 panels)</span>
<svg class="b" style="left:0;top:0" width="1862" height="1013" viewBox="0 0 1862 1013"><rect x="1834.10" y="948.50" width="2.600" height="2.600" fill="#3c3d40"/><rect x="1839.20" y="948.50" width="2.600" height="2.600" fill="#3c3d40"/><rect x="1834.10" y="954.05" width="2.600" height="2.600" fill="#3c3d40"/><rect x="1839.20" y="954.05" width="2.600" height="2.600" fill="#3c3d40"/><rect x="1834.10" y="959.60" width="2.600" height="2.600" fill="#3c3d40"/><rect x="1839.20" y="959.60" width="2.600" height="2.600" fill="#3c3d40"/><rect x="1834.10" y="965.15" width="2.600" height="2.600" fill="#3c3d40"/><rect x="1839.20" y="965.15" width="2.600" height="2.600" fill="#3c3d40"/></svg>
<div class="b" style="left:16.00px;top:981.00px;width:1830.00px;height:30.00px;background:#181b1f;border-radius:2px;"></div>
<svg class="b" style="left:21.00px;top:990.80px;color:rgb(204,204,220);" width="14" height="14" viewBox="0 0 24 24"><g fill="none" stroke="currentColor" stroke-width="2" stroke-linecap="round" stroke-linejoin="round"><path d="M10 7l5 5-5 5"/></g></svg>
<span class="t" style="left:36.50px;top:987px;font-size:16.30px;line-height:18px;color:rgb(204,204,220);letter-spacing:0.769px;-webkit-text-stroke:0.75px rgb(204,204,220);">Memory Meminfo</span>
<span class="t" style="left:190.00px;top:991px;font-size:12.30px;line-height:14px;color:rgb(141,142,152);letter-spacing:0.125px;font-style:italic;-webkit-text-stroke:0.22px rgb(141,142,152);">(15 panels)</span>
<svg class="b" style="left:0;top:0" width="1862" height="1013" viewBox="0 0 1862 1013"><rect x="1834.10" y="986.50" width="2.600" height="2.600" fill="#3c3d40"/><rect x="1839.20" y="986.50" width="2.600" height="2.600" fill="#3c3d40"/><rect x="1834.10" y="992.05" width="2.600" height="2.600" fill="#3c3d40"/><rect x="1839.20" y="992.05" width="2.600" height="2.600" fill="#3c3d40"/><rect x="1834.10" y="997.60" width="2.600" height="2.600" fill="#3c3d40"/><rect x="1839.20" y="997.60" width="2.600" height="2.600" fill="#3c3d40"/><rect x="1834.10" y="1003.15" width="2.600" height="2.600" fill="#3c3d40"/><rect x="1839.20" y="1003.15" width="2.600" height="2.600" fill="#3c3d40"/></svg>
<div class="b" style="left:0;top:43px;width:1862px;height:970px;overflow:hidden;pointer-events:none;"><div class="b" style="left:0;top:-20px;width:1862px;height:990px;border:1px solid #26282d;border-radius:0 0 11px 11px;box-sizing:border-box;box-shadow:0 0 0 12px #0b0e11;"></div></div>
</div></body></html>
